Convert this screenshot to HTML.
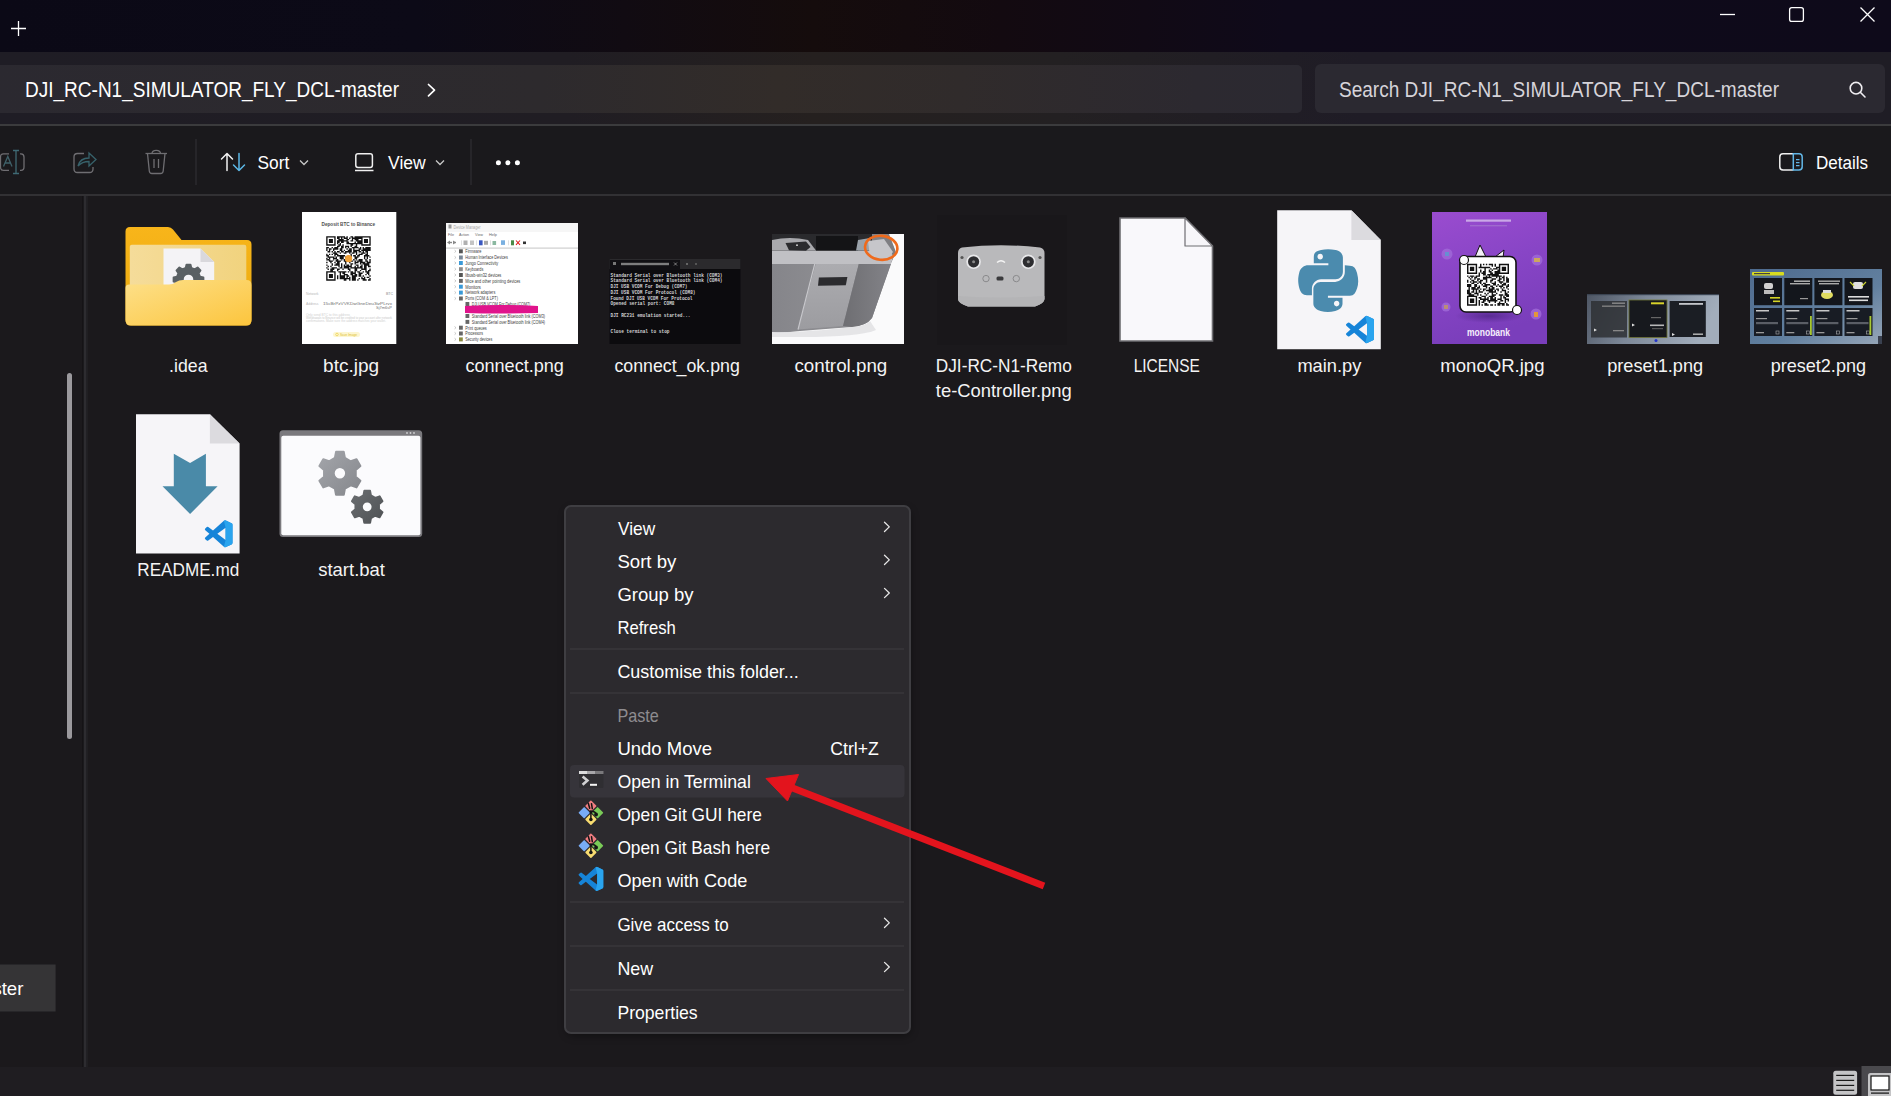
<!DOCTYPE html>
<html><head><meta charset="utf-8"><title>Explorer</title>
<style>html,body{margin:0;padding:0;width:1891px;height:1096px;overflow:hidden;background:#1c1a1e}svg{display:block}</style>
</head><body>
<svg width="1891" height="1096" viewBox="0 0 1891 1096" font-family="Liberation Sans, sans-serif">
<defs>
<linearGradient id="gTitle" x1="0" x2="1" y1="0" y2="0">
 <stop offset="0" stop-color="#0b0916"/><stop offset="0.22" stop-color="#0c0a17"/>
 <stop offset="0.33" stop-color="#110b12"/><stop offset="0.43" stop-color="#150c0c"/><stop offset="0.53" stop-color="#130a10"/>
 <stop offset="0.68" stop-color="#0f0a1a"/><stop offset="1" stop-color="#0e0a1a"/>
</linearGradient>
<linearGradient id="gNav" x1="0" x2="1" y1="0" y2="0">
 <stop offset="0" stop-color="#1f1d25"/><stop offset="0.3" stop-color="#201d23"/>
 <stop offset="0.43" stop-color="#25201f"/><stop offset="0.56" stop-color="#232022"/>
 <stop offset="0.72" stop-color="#1f1c26"/><stop offset="1" stop-color="#1f1d25"/>
</linearGradient>
<linearGradient id="gAddr" x1="0" x2="1" y1="0" y2="0">
 <stop offset="0" stop-color="#2b2930"/><stop offset="0.42" stop-color="#2d2a2d"/>
 <stop offset="0.6" stop-color="#322c29"/><stop offset="0.74" stop-color="#302b2b"/>
 <stop offset="0.92" stop-color="#2c2930"/><stop offset="1" stop-color="#2b2931"/>
</linearGradient>
</defs>
<rect x="0" y="0" width="1891" height="1096" fill="#1b191c"/>
<rect x="0" y="0" width="1891" height="52" fill="url(#gTitle)"/>
<rect x="0" y="52" width="1891" height="72" fill="url(#gNav)"/>
<rect x="-10" y="65" width="1312" height="48" rx="5" fill="url(#gAddr)"/>
<rect x="1315" y="64" width="570" height="49" rx="6" fill="#2b2931"/>
<rect x="0" y="124" width="1891" height="2" fill="#3b3b3d"/>
<rect x="0" y="126" width="1891" height="68" fill="#1a191c"/>
<rect x="0" y="194" width="1891" height="2" fill="#323134"/>
<rect x="82.3" y="196" width="1.4" height="871" fill="#131215"/><rect x="83.7" y="196" width="2.8" height="871" fill="#2d2c30"/><rect x="86.5" y="196" width="1.5" height="871" fill="#201f22"/>
<rect x="67" y="373" width="5" height="366" rx="2.5" fill="#9b999d"/>
<rect x="0" y="1067" width="1891" height="29" fill="#1f1d21"/>
<g stroke="#ffffff" stroke-width="1.3" fill="none"><path d="M11 28.5H26M18.5 21V36"/><path d="M1720 14.5H1735"/><rect x="1789.6" y="7.6" width="13.8" height="13.8" rx="2.2"/><path d="M1860.5 7.5L1874.5 21.5M1874.5 7.5L1860.5 21.5"/></g>
<text x="25" y="97" font-size="22" fill="#ffffff" textLength="374" lengthAdjust="spacingAndGlyphs" font-family="Liberation Sans" >DJI_RC-N1_SIMULATOR_FLY_DCL-master</text>
<path d="M428.5 84.5L434.5 90.2L428.5 95.8" stroke="#ffffff" stroke-width="1.7" fill="none" stroke-linecap="round" stroke-linejoin="round"/>
<text x="1339" y="97" font-size="22" fill="#d6d4da" textLength="440" lengthAdjust="spacingAndGlyphs" font-family="Liberation Sans" >Search DJI_RC-N1_SIMULATOR_FLY_DCL-master</text>
<g stroke="#f0eef2" stroke-width="1.6" fill="none"><circle cx="1856" cy="88.2" r="5.8"/><path d="M1860.3 92.3L1865 97" stroke-linecap="round"/></g>
<g fill="none" stroke-width="1.3" opacity="1"><path d="M9 153.8H3.5Q0.5 153.8 0.5 157V167Q0.5 170.3 3.5 170.3H9" stroke="#6f6e72"/><path d="M20 153.8H21Q24 153.8 24 157V167Q24 170.3 21 170.3H20" stroke="#6f6e72"/><path d="M3.5 166.5L7.8 156.5L12 166.5M5 163H10.5" stroke="#3f6169"/><path d="M16 150.5V173.5M13 150.5H19M13 173.5H19" stroke="#3f6a74"/></g>
<g fill="none" stroke-width="1.3"><path d="M84 153.5H77.5Q74 153.5 74 157V169Q74 172.5 77.5 172.5H89.5Q93 172.5 93 169V167" stroke="#6f6e72"/><path d="M78 166Q80 158 89 158V153L96 159.5L89 166V161.5Q82 161.5 78 166Z" stroke="#37626b"/></g>
<g fill="none" stroke="#6f6e72" stroke-width="1.3"><path d="M145.5 153.5H167"/><path d="M152 153.5Q152 150.3 156.2 150.3Q160.5 150.3 160.5 153.5"/><path d="M147.5 153.5L149.3 171Q149.5 173.5 152 173.5H160.5Q163 173.5 163.2 171L165 153.5"/><path d="M154 159V168M158.5 159V168"/></g>
<rect x="195.5" y="139" width="1" height="46" fill="#333236"/>
<g fill="none" stroke-width="1.5" stroke-linecap="round" stroke-linejoin="round"><path d="M227 170.5V153.5M221.5 159L227 153.5L232.5 159" stroke="#f2f2f2"/><path d="M239 153.5V170.5M233.5 165L239 170.5L244.5 165" stroke="#5cb8e6"/></g>
<text x="257.5" y="169" font-size="18" fill="#ffffff" textLength="31.8" lengthAdjust="spacingAndGlyphs" font-family="Liberation Sans" >Sort</text>
<path d="M300 160.5L304 164.5L308 160.5" stroke="#c8c8c8" stroke-width="1.3" fill="none"/>
<g fill="none" stroke="#f0f0f0" stroke-width="1.5"><rect x="355.8" y="153.8" width="16.6" height="13.6" rx="2.2"/><path d="M355 170.5H373.5"/></g>
<text x="388" y="169" font-size="18" fill="#ffffff" textLength="37.7" lengthAdjust="spacingAndGlyphs" font-family="Liberation Sans" >View</text>
<path d="M436 160.5L440 164.5L444 160.5" stroke="#c8c8c8" stroke-width="1.3" fill="none"/>
<rect x="470.5" y="139" width="1" height="46" fill="#333236"/>
<g fill="#ffffff"><circle cx="498.4" cy="162.7" r="2.5"/><circle cx="507.9" cy="162.7" r="2.5"/><circle cx="517.4" cy="162.7" r="2.5"/></g>
<g fill="none" stroke-width="1.5"><path d="M1793.5 153.8H1783Q1779.8 153.8 1779.8 157V166.8Q1779.8 170 1783 170H1793.5" stroke="#f0f0f0"/><path d="M1793.3 153.8H1799Q1802.2 153.8 1802.2 157V166.8Q1802.2 170 1799 170H1793.3Z" stroke="#62b6e6"/><path d="M1796 159.7H1799.5M1796 162.6H1799.5M1796 165.6H1799.5" stroke="#62b6e6" stroke-width="1.2"/></g>
<text x="1816" y="168.8" font-size="18" fill="#ffffff" textLength="52" lengthAdjust="spacingAndGlyphs" font-family="Liberation Sans" >Details</text>
<defs><linearGradient id="gFront" x1="0" y1="0" x2="1" y2="1"><stop offset="0" stop-color="#fde08a"/><stop offset="1" stop-color="#fcc53d"/></linearGradient><linearGradient id="gBack" x1="0" y1="0" x2="0" y2="1"><stop offset="0" stop-color="#f8b51a"/><stop offset="1" stop-color="#e9a90f"/></linearGradient><linearGradient id="gPaper" x1="0" y1="0" x2="1" y2="0"><stop offset="0" stop-color="#f5dc9a"/><stop offset="1" stop-color="#f1d37e"/></linearGradient></defs>
<path d="M130 227H168Q171 227 173 229.5L181.5 240H247Q251.5 240 251.5 244.5V320Q251.5 325.5 246 325.5H131Q125.5 325.5 125.5 320V231.5Q125.5 227 130 227Z" fill="url(#gBack)"/>
<rect x="129.8" y="244.8" width="116.5" height="60" rx="2" fill="url(#gPaper)"/>
<path d="M163.5 248.6H200.5L214.2 262V300H163.5Z" fill="#f4f3f6"/><path d="M200.5 248.6V262H214.2Z" fill="#d9d8dc"/>
<path d="M185.75 268.03 L186.50 264.63 L190.50 264.63 L191.25 268.03 L194.67 269.44 L197.60 267.58 L200.42 270.40 L198.56 273.33 L199.97 276.75 L203.37 277.50 L203.37 281.50 L199.97 282.25 L198.56 285.67 L200.42 288.60 L197.60 291.42 L194.67 289.56 L191.25 290.97 L190.50 294.37 L186.50 294.37 L185.75 290.97 L182.33 289.56 L179.40 291.42 L176.58 288.60 L178.44 285.67 L177.03 282.25 L173.63 281.50 L173.63 277.50 L177.03 276.75 L178.44 273.33 L176.58 270.40 L179.40 267.58 L182.33 269.44Z M194.30 279.50 A5.8 5.8 0 1 0 182.70 279.50 A5.8 5.8 0 1 0 194.30 279.50Z" fill="#5a6064" fill-rule="evenodd" stroke="#5a6064" stroke-width="2" stroke-linejoin="round"/>
<path d="M125.5 288Q125.5 284.5 129 284.5H169Q173 284.5 176 282Q179 280 183 280H246.5Q251.5 280 251.5 285V320Q251.5 325.5 246 325.5H131Q125.5 325.5 125.5 320Z" fill="url(#gFront)"/>
<rect x="302" y="212" width="94.3" height="132" fill="#ffffff"/>
<text x="321.5" y="226.2" font-size="5.4" fill="#505050" font-weight="bold" textLength="53.5" lengthAdjust="spacingAndGlyphs" font-family="Liberation Sans" >Deposit BTC to Binance</text>
<path d="M326.20 246.99h1.35v1.35h-1.35z M326.20 248.34h1.35v1.35h-1.35z M326.20 249.68h1.35v1.35h-1.35z M326.20 253.73h1.35v1.35h-1.35z M326.20 255.08h1.35v1.35h-1.35z M326.20 257.78h1.35v1.35h-1.35z M326.20 259.12h1.35v1.35h-1.35z M326.20 261.82h1.35v1.35h-1.35z M326.20 264.52h1.35v1.35h-1.35z M326.20 267.22h1.35v1.35h-1.35z M327.55 246.99h1.35v1.35h-1.35z M327.55 251.03h1.35v1.35h-1.35z M327.55 255.08h1.35v1.35h-1.35z M327.55 256.43h1.35v1.35h-1.35z M327.55 259.12h1.35v1.35h-1.35z M327.55 265.87h1.35v1.35h-1.35z M327.55 268.56h1.35v1.35h-1.35z M328.90 248.34h1.35v1.35h-1.35z M328.90 249.68h1.35v1.35h-1.35z M328.90 251.03h1.35v1.35h-1.35z M328.90 253.73h1.35v1.35h-1.35z M328.90 256.43h1.35v1.35h-1.35z M328.90 257.78h1.35v1.35h-1.35z M328.90 259.12h1.35v1.35h-1.35z M328.90 260.47h1.35v1.35h-1.35z M330.25 248.34h1.35v1.35h-1.35z M330.25 256.43h1.35v1.35h-1.35z M330.25 260.47h1.35v1.35h-1.35z M330.25 261.82h1.35v1.35h-1.35z M330.25 265.87h1.35v1.35h-1.35z M330.25 268.56h1.35v1.35h-1.35z M330.25 269.91h1.35v1.35h-1.35z M331.59 246.99h1.35v1.35h-1.35z M331.59 251.03h1.35v1.35h-1.35z M331.59 253.73h1.35v1.35h-1.35z M331.59 256.43h1.35v1.35h-1.35z M331.59 260.47h1.35v1.35h-1.35z M331.59 263.17h1.35v1.35h-1.35z M331.59 264.52h1.35v1.35h-1.35z M331.59 267.22h1.35v1.35h-1.35z M331.59 268.56h1.35v1.35h-1.35z M331.59 269.91h1.35v1.35h-1.35z M332.94 248.34h1.35v1.35h-1.35z M332.94 249.68h1.35v1.35h-1.35z M332.94 252.38h1.35v1.35h-1.35z M332.94 256.43h1.35v1.35h-1.35z M332.94 257.78h1.35v1.35h-1.35z M332.94 259.12h1.35v1.35h-1.35z M332.94 267.22h1.35v1.35h-1.35z M332.94 268.56h1.35v1.35h-1.35z M334.29 246.99h1.35v1.35h-1.35z M334.29 248.34h1.35v1.35h-1.35z M334.29 251.03h1.35v1.35h-1.35z M334.29 252.38h1.35v1.35h-1.35z M334.29 253.73h1.35v1.35h-1.35z M334.29 255.08h1.35v1.35h-1.35z M334.29 257.78h1.35v1.35h-1.35z M334.29 261.82h1.35v1.35h-1.35z M334.29 264.52h1.35v1.35h-1.35z M334.29 267.22h1.35v1.35h-1.35z M335.64 246.99h1.35v1.35h-1.35z M335.64 248.34h1.35v1.35h-1.35z M335.64 252.38h1.35v1.35h-1.35z M335.64 253.73h1.35v1.35h-1.35z M335.64 256.43h1.35v1.35h-1.35z M335.64 257.78h1.35v1.35h-1.35z M335.64 259.12h1.35v1.35h-1.35z M335.64 260.47h1.35v1.35h-1.35z M335.64 263.17h1.35v1.35h-1.35z M335.64 264.52h1.35v1.35h-1.35z M335.64 267.22h1.35v1.35h-1.35z M336.99 236.20h1.35v1.35h-1.35z M336.99 237.55h1.35v1.35h-1.35z M336.99 240.25h1.35v1.35h-1.35z M336.99 241.59h1.35v1.35h-1.35z M336.99 242.94h1.35v1.35h-1.35z M336.99 245.64h1.35v1.35h-1.35z M336.99 246.99h1.35v1.35h-1.35z M336.99 248.34h1.35v1.35h-1.35z M336.99 251.03h1.35v1.35h-1.35z M336.99 253.73h1.35v1.35h-1.35z M336.99 255.08h1.35v1.35h-1.35z M336.99 259.12h1.35v1.35h-1.35z M336.99 260.47h1.35v1.35h-1.35z M336.99 261.82h1.35v1.35h-1.35z M336.99 263.17h1.35v1.35h-1.35z M336.99 264.52h1.35v1.35h-1.35z M336.99 268.56h1.35v1.35h-1.35z M336.99 269.91h1.35v1.35h-1.35z M336.99 275.31h1.35v1.35h-1.35z M336.99 276.65h1.35v1.35h-1.35z M336.99 278.00h1.35v1.35h-1.35z M338.34 236.20h1.35v1.35h-1.35z M338.34 237.55h1.35v1.35h-1.35z M338.34 238.90h1.35v1.35h-1.35z M338.34 240.25h1.35v1.35h-1.35z M338.34 241.59h1.35v1.35h-1.35z M338.34 244.29h1.35v1.35h-1.35z M338.34 245.64h1.35v1.35h-1.35z M338.34 251.03h1.35v1.35h-1.35z M338.34 255.08h1.35v1.35h-1.35z M338.34 260.47h1.35v1.35h-1.35z M338.34 261.82h1.35v1.35h-1.35z M338.34 263.17h1.35v1.35h-1.35z M338.34 264.52h1.35v1.35h-1.35z M338.34 265.87h1.35v1.35h-1.35z M338.34 268.56h1.35v1.35h-1.35z M338.34 271.26h1.35v1.35h-1.35z M339.68 236.20h1.35v1.35h-1.35z M339.68 238.90h1.35v1.35h-1.35z M339.68 240.25h1.35v1.35h-1.35z M339.68 242.94h1.35v1.35h-1.35z M339.68 244.29h1.35v1.35h-1.35z M339.68 248.34h1.35v1.35h-1.35z M339.68 249.68h1.35v1.35h-1.35z M339.68 252.38h1.35v1.35h-1.35z M339.68 255.08h1.35v1.35h-1.35z M339.68 256.43h1.35v1.35h-1.35z M339.68 257.78h1.35v1.35h-1.35z M339.68 260.47h1.35v1.35h-1.35z M339.68 267.22h1.35v1.35h-1.35z M339.68 271.26h1.35v1.35h-1.35z M339.68 272.61h1.35v1.35h-1.35z M339.68 273.96h1.35v1.35h-1.35z M339.68 275.31h1.35v1.35h-1.35z M339.68 276.65h1.35v1.35h-1.35z M339.68 278.00h1.35v1.35h-1.35z M341.03 236.20h1.35v1.35h-1.35z M341.03 237.55h1.35v1.35h-1.35z M341.03 238.90h1.35v1.35h-1.35z M341.03 240.25h1.35v1.35h-1.35z M341.03 241.59h1.35v1.35h-1.35z M341.03 245.64h1.35v1.35h-1.35z M341.03 246.99h1.35v1.35h-1.35z M341.03 248.34h1.35v1.35h-1.35z M341.03 249.68h1.35v1.35h-1.35z M341.03 251.03h1.35v1.35h-1.35z M341.03 255.08h1.35v1.35h-1.35z M341.03 256.43h1.35v1.35h-1.35z M341.03 257.78h1.35v1.35h-1.35z M341.03 259.12h1.35v1.35h-1.35z M341.03 263.17h1.35v1.35h-1.35z M341.03 264.52h1.35v1.35h-1.35z M341.03 265.87h1.35v1.35h-1.35z M341.03 267.22h1.35v1.35h-1.35z M341.03 271.26h1.35v1.35h-1.35z M341.03 275.31h1.35v1.35h-1.35z M341.03 276.65h1.35v1.35h-1.35z M341.03 278.00h1.35v1.35h-1.35z M342.38 236.20h1.35v1.35h-1.35z M342.38 238.90h1.35v1.35h-1.35z M342.38 240.25h1.35v1.35h-1.35z M342.38 241.59h1.35v1.35h-1.35z M342.38 244.29h1.35v1.35h-1.35z M342.38 245.64h1.35v1.35h-1.35z M342.38 246.99h1.35v1.35h-1.35z M342.38 251.03h1.35v1.35h-1.35z M342.38 255.08h1.35v1.35h-1.35z M342.38 256.43h1.35v1.35h-1.35z M342.38 257.78h1.35v1.35h-1.35z M342.38 268.56h1.35v1.35h-1.35z M342.38 271.26h1.35v1.35h-1.35z M342.38 272.61h1.35v1.35h-1.35z M342.38 275.31h1.35v1.35h-1.35z M342.38 276.65h1.35v1.35h-1.35z M342.38 278.00h1.35v1.35h-1.35z M343.73 236.20h1.35v1.35h-1.35z M343.73 237.55h1.35v1.35h-1.35z M343.73 240.25h1.35v1.35h-1.35z M343.73 249.68h1.35v1.35h-1.35z M343.73 252.38h1.35v1.35h-1.35z M343.73 255.08h1.35v1.35h-1.35z M343.73 259.12h1.35v1.35h-1.35z M343.73 260.47h1.35v1.35h-1.35z M343.73 264.52h1.35v1.35h-1.35z M343.73 265.87h1.35v1.35h-1.35z M343.73 267.22h1.35v1.35h-1.35z M343.73 271.26h1.35v1.35h-1.35z M343.73 272.61h1.35v1.35h-1.35z M343.73 273.96h1.35v1.35h-1.35z M343.73 275.31h1.35v1.35h-1.35z M343.73 276.65h1.35v1.35h-1.35z M343.73 278.00h1.35v1.35h-1.35z M343.73 279.35h1.35v1.35h-1.35z M345.08 237.55h1.35v1.35h-1.35z M345.08 240.25h1.35v1.35h-1.35z M345.08 245.64h1.35v1.35h-1.35z M345.08 246.99h1.35v1.35h-1.35z M345.08 251.03h1.35v1.35h-1.35z M345.08 252.38h1.35v1.35h-1.35z M345.08 256.43h1.35v1.35h-1.35z M345.08 257.78h1.35v1.35h-1.35z M345.08 260.47h1.35v1.35h-1.35z M345.08 261.82h1.35v1.35h-1.35z M345.08 263.17h1.35v1.35h-1.35z M345.08 265.87h1.35v1.35h-1.35z M345.08 267.22h1.35v1.35h-1.35z M345.08 271.26h1.35v1.35h-1.35z M345.08 273.96h1.35v1.35h-1.35z M345.08 278.00h1.35v1.35h-1.35z M345.08 279.35h1.35v1.35h-1.35z M346.43 236.20h1.35v1.35h-1.35z M346.43 237.55h1.35v1.35h-1.35z M346.43 238.90h1.35v1.35h-1.35z M346.43 240.25h1.35v1.35h-1.35z M346.43 241.59h1.35v1.35h-1.35z M346.43 242.94h1.35v1.35h-1.35z M346.43 245.64h1.35v1.35h-1.35z M346.43 248.34h1.35v1.35h-1.35z M346.43 251.03h1.35v1.35h-1.35z M346.43 256.43h1.35v1.35h-1.35z M346.43 260.47h1.35v1.35h-1.35z M346.43 264.52h1.35v1.35h-1.35z M346.43 265.87h1.35v1.35h-1.35z M346.43 267.22h1.35v1.35h-1.35z M346.43 273.96h1.35v1.35h-1.35z M346.43 275.31h1.35v1.35h-1.35z M346.43 276.65h1.35v1.35h-1.35z M346.43 278.00h1.35v1.35h-1.35z M347.78 238.90h1.35v1.35h-1.35z M347.78 241.59h1.35v1.35h-1.35z M347.78 242.94h1.35v1.35h-1.35z M347.78 245.64h1.35v1.35h-1.35z M347.78 246.99h1.35v1.35h-1.35z M347.78 249.68h1.35v1.35h-1.35z M347.78 251.03h1.35v1.35h-1.35z M347.78 255.08h1.35v1.35h-1.35z M347.78 256.43h1.35v1.35h-1.35z M347.78 257.78h1.35v1.35h-1.35z M347.78 259.12h1.35v1.35h-1.35z M347.78 260.47h1.35v1.35h-1.35z M347.78 264.52h1.35v1.35h-1.35z M347.78 265.87h1.35v1.35h-1.35z M347.78 267.22h1.35v1.35h-1.35z M347.78 268.56h1.35v1.35h-1.35z M347.78 271.26h1.35v1.35h-1.35z M347.78 275.31h1.35v1.35h-1.35z M347.78 278.00h1.35v1.35h-1.35z M349.12 237.55h1.35v1.35h-1.35z M349.12 242.94h1.35v1.35h-1.35z M349.12 248.34h1.35v1.35h-1.35z M349.12 249.68h1.35v1.35h-1.35z M349.12 251.03h1.35v1.35h-1.35z M349.12 252.38h1.35v1.35h-1.35z M349.12 257.78h1.35v1.35h-1.35z M349.12 261.82h1.35v1.35h-1.35z M349.12 265.87h1.35v1.35h-1.35z M349.12 268.56h1.35v1.35h-1.35z M349.12 269.91h1.35v1.35h-1.35z M349.12 276.65h1.35v1.35h-1.35z M349.12 278.00h1.35v1.35h-1.35z M349.12 279.35h1.35v1.35h-1.35z M350.47 236.20h1.35v1.35h-1.35z M350.47 240.25h1.35v1.35h-1.35z M350.47 242.94h1.35v1.35h-1.35z M350.47 244.29h1.35v1.35h-1.35z M350.47 245.64h1.35v1.35h-1.35z M350.47 248.34h1.35v1.35h-1.35z M350.47 249.68h1.35v1.35h-1.35z M350.47 251.03h1.35v1.35h-1.35z M350.47 253.73h1.35v1.35h-1.35z M350.47 255.08h1.35v1.35h-1.35z M350.47 256.43h1.35v1.35h-1.35z M350.47 257.78h1.35v1.35h-1.35z M350.47 260.47h1.35v1.35h-1.35z M350.47 263.17h1.35v1.35h-1.35z M350.47 264.52h1.35v1.35h-1.35z M350.47 265.87h1.35v1.35h-1.35z M350.47 267.22h1.35v1.35h-1.35z M350.47 271.26h1.35v1.35h-1.35z M350.47 272.61h1.35v1.35h-1.35z M350.47 273.96h1.35v1.35h-1.35z M351.82 236.20h1.35v1.35h-1.35z M351.82 237.55h1.35v1.35h-1.35z M351.82 238.90h1.35v1.35h-1.35z M351.82 240.25h1.35v1.35h-1.35z M351.82 242.94h1.35v1.35h-1.35z M351.82 244.29h1.35v1.35h-1.35z M351.82 246.99h1.35v1.35h-1.35z M351.82 252.38h1.35v1.35h-1.35z M351.82 260.47h1.35v1.35h-1.35z M351.82 263.17h1.35v1.35h-1.35z M351.82 267.22h1.35v1.35h-1.35z M351.82 271.26h1.35v1.35h-1.35z M351.82 272.61h1.35v1.35h-1.35z M351.82 273.96h1.35v1.35h-1.35z M351.82 275.31h1.35v1.35h-1.35z M351.82 276.65h1.35v1.35h-1.35z M351.82 278.00h1.35v1.35h-1.35z M351.82 279.35h1.35v1.35h-1.35z M353.17 237.55h1.35v1.35h-1.35z M353.17 242.94h1.35v1.35h-1.35z M353.17 246.99h1.35v1.35h-1.35z M353.17 248.34h1.35v1.35h-1.35z M353.17 249.68h1.35v1.35h-1.35z M353.17 251.03h1.35v1.35h-1.35z M353.17 252.38h1.35v1.35h-1.35z M353.17 255.08h1.35v1.35h-1.35z M353.17 259.12h1.35v1.35h-1.35z M353.17 267.22h1.35v1.35h-1.35z M353.17 272.61h1.35v1.35h-1.35z M353.17 275.31h1.35v1.35h-1.35z M353.17 276.65h1.35v1.35h-1.35z M353.17 278.00h1.35v1.35h-1.35z M353.17 279.35h1.35v1.35h-1.35z M354.52 236.20h1.35v1.35h-1.35z M354.52 237.55h1.35v1.35h-1.35z M354.52 238.90h1.35v1.35h-1.35z M354.52 241.59h1.35v1.35h-1.35z M354.52 242.94h1.35v1.35h-1.35z M354.52 245.64h1.35v1.35h-1.35z M354.52 246.99h1.35v1.35h-1.35z M354.52 249.68h1.35v1.35h-1.35z M354.52 251.03h1.35v1.35h-1.35z M354.52 255.08h1.35v1.35h-1.35z M354.52 256.43h1.35v1.35h-1.35z M354.52 257.78h1.35v1.35h-1.35z M354.52 260.47h1.35v1.35h-1.35z M354.52 261.82h1.35v1.35h-1.35z M354.52 263.17h1.35v1.35h-1.35z M354.52 265.87h1.35v1.35h-1.35z M354.52 267.22h1.35v1.35h-1.35z M354.52 268.56h1.35v1.35h-1.35z M354.52 269.91h1.35v1.35h-1.35z M354.52 271.26h1.35v1.35h-1.35z M354.52 272.61h1.35v1.35h-1.35z M354.52 273.96h1.35v1.35h-1.35z M354.52 275.31h1.35v1.35h-1.35z M354.52 276.65h1.35v1.35h-1.35z M354.52 278.00h1.35v1.35h-1.35z M354.52 279.35h1.35v1.35h-1.35z M355.87 236.20h1.35v1.35h-1.35z M355.87 237.55h1.35v1.35h-1.35z M355.87 238.90h1.35v1.35h-1.35z M355.87 240.25h1.35v1.35h-1.35z M355.87 242.94h1.35v1.35h-1.35z M355.87 244.29h1.35v1.35h-1.35z M355.87 245.64h1.35v1.35h-1.35z M355.87 246.99h1.35v1.35h-1.35z M355.87 249.68h1.35v1.35h-1.35z M355.87 251.03h1.35v1.35h-1.35z M355.87 252.38h1.35v1.35h-1.35z M355.87 253.73h1.35v1.35h-1.35z M355.87 256.43h1.35v1.35h-1.35z M355.87 257.78h1.35v1.35h-1.35z M355.87 259.12h1.35v1.35h-1.35z M355.87 261.82h1.35v1.35h-1.35z M355.87 264.52h1.35v1.35h-1.35z M355.87 267.22h1.35v1.35h-1.35z M355.87 268.56h1.35v1.35h-1.35z M355.87 269.91h1.35v1.35h-1.35z M355.87 273.96h1.35v1.35h-1.35z M355.87 275.31h1.35v1.35h-1.35z M357.22 236.20h1.35v1.35h-1.35z M357.22 237.55h1.35v1.35h-1.35z M357.22 238.90h1.35v1.35h-1.35z M357.22 240.25h1.35v1.35h-1.35z M357.22 241.59h1.35v1.35h-1.35z M357.22 242.94h1.35v1.35h-1.35z M357.22 246.99h1.35v1.35h-1.35z M357.22 249.68h1.35v1.35h-1.35z M357.22 255.08h1.35v1.35h-1.35z M357.22 256.43h1.35v1.35h-1.35z M357.22 260.47h1.35v1.35h-1.35z M357.22 261.82h1.35v1.35h-1.35z M357.22 264.52h1.35v1.35h-1.35z M357.22 265.87h1.35v1.35h-1.35z M357.22 267.22h1.35v1.35h-1.35z M357.22 271.26h1.35v1.35h-1.35z M357.22 279.35h1.35v1.35h-1.35z M358.56 236.20h1.35v1.35h-1.35z M358.56 237.55h1.35v1.35h-1.35z M358.56 240.25h1.35v1.35h-1.35z M358.56 241.59h1.35v1.35h-1.35z M358.56 242.94h1.35v1.35h-1.35z M358.56 248.34h1.35v1.35h-1.35z M358.56 249.68h1.35v1.35h-1.35z M358.56 251.03h1.35v1.35h-1.35z M358.56 253.73h1.35v1.35h-1.35z M358.56 255.08h1.35v1.35h-1.35z M358.56 259.12h1.35v1.35h-1.35z M358.56 260.47h1.35v1.35h-1.35z M358.56 267.22h1.35v1.35h-1.35z M358.56 271.26h1.35v1.35h-1.35z M358.56 272.61h1.35v1.35h-1.35z M358.56 273.96h1.35v1.35h-1.35z M358.56 275.31h1.35v1.35h-1.35z M358.56 278.00h1.35v1.35h-1.35z M359.91 236.20h1.35v1.35h-1.35z M359.91 237.55h1.35v1.35h-1.35z M359.91 240.25h1.35v1.35h-1.35z M359.91 241.59h1.35v1.35h-1.35z M359.91 242.94h1.35v1.35h-1.35z M359.91 246.99h1.35v1.35h-1.35z M359.91 248.34h1.35v1.35h-1.35z M359.91 251.03h1.35v1.35h-1.35z M359.91 253.73h1.35v1.35h-1.35z M359.91 259.12h1.35v1.35h-1.35z M359.91 260.47h1.35v1.35h-1.35z M359.91 261.82h1.35v1.35h-1.35z M359.91 263.17h1.35v1.35h-1.35z M359.91 265.87h1.35v1.35h-1.35z M359.91 267.22h1.35v1.35h-1.35z M359.91 269.91h1.35v1.35h-1.35z M359.91 272.61h1.35v1.35h-1.35z M359.91 273.96h1.35v1.35h-1.35z M359.91 275.31h1.35v1.35h-1.35z M361.26 249.68h1.35v1.35h-1.35z M361.26 252.38h1.35v1.35h-1.35z M361.26 253.73h1.35v1.35h-1.35z M361.26 259.12h1.35v1.35h-1.35z M361.26 260.47h1.35v1.35h-1.35z M361.26 261.82h1.35v1.35h-1.35z M361.26 264.52h1.35v1.35h-1.35z M361.26 265.87h1.35v1.35h-1.35z M361.26 267.22h1.35v1.35h-1.35z M361.26 268.56h1.35v1.35h-1.35z M361.26 272.61h1.35v1.35h-1.35z M361.26 276.65h1.35v1.35h-1.35z M361.26 278.00h1.35v1.35h-1.35z M362.61 246.99h1.35v1.35h-1.35z M362.61 248.34h1.35v1.35h-1.35z M362.61 249.68h1.35v1.35h-1.35z M362.61 251.03h1.35v1.35h-1.35z M362.61 252.38h1.35v1.35h-1.35z M362.61 261.82h1.35v1.35h-1.35z M362.61 263.17h1.35v1.35h-1.35z M362.61 268.56h1.35v1.35h-1.35z M362.61 271.26h1.35v1.35h-1.35z M362.61 275.31h1.35v1.35h-1.35z M362.61 278.00h1.35v1.35h-1.35z M362.61 279.35h1.35v1.35h-1.35z M363.96 248.34h1.35v1.35h-1.35z M363.96 249.68h1.35v1.35h-1.35z M363.96 252.38h1.35v1.35h-1.35z M363.96 255.08h1.35v1.35h-1.35z M363.96 256.43h1.35v1.35h-1.35z M363.96 257.78h1.35v1.35h-1.35z M363.96 261.82h1.35v1.35h-1.35z M363.96 263.17h1.35v1.35h-1.35z M363.96 264.52h1.35v1.35h-1.35z M363.96 265.87h1.35v1.35h-1.35z M363.96 267.22h1.35v1.35h-1.35z M363.96 268.56h1.35v1.35h-1.35z M363.96 276.65h1.35v1.35h-1.35z M363.96 278.00h1.35v1.35h-1.35z M363.96 279.35h1.35v1.35h-1.35z M365.31 246.99h1.35v1.35h-1.35z M365.31 248.34h1.35v1.35h-1.35z M365.31 249.68h1.35v1.35h-1.35z M365.31 251.03h1.35v1.35h-1.35z M365.31 253.73h1.35v1.35h-1.35z M365.31 255.08h1.35v1.35h-1.35z M365.31 259.12h1.35v1.35h-1.35z M365.31 260.47h1.35v1.35h-1.35z M365.31 263.17h1.35v1.35h-1.35z M365.31 264.52h1.35v1.35h-1.35z M365.31 265.87h1.35v1.35h-1.35z M365.31 267.22h1.35v1.35h-1.35z M365.31 268.56h1.35v1.35h-1.35z M365.31 269.91h1.35v1.35h-1.35z M365.31 271.26h1.35v1.35h-1.35z M365.31 273.96h1.35v1.35h-1.35z M365.31 279.35h1.35v1.35h-1.35z M366.65 246.99h1.35v1.35h-1.35z M366.65 248.34h1.35v1.35h-1.35z M366.65 249.68h1.35v1.35h-1.35z M366.65 251.03h1.35v1.35h-1.35z M366.65 252.38h1.35v1.35h-1.35z M366.65 253.73h1.35v1.35h-1.35z M366.65 255.08h1.35v1.35h-1.35z M366.65 256.43h1.35v1.35h-1.35z M366.65 257.78h1.35v1.35h-1.35z M366.65 260.47h1.35v1.35h-1.35z M366.65 261.82h1.35v1.35h-1.35z M366.65 263.17h1.35v1.35h-1.35z M366.65 264.52h1.35v1.35h-1.35z M366.65 271.26h1.35v1.35h-1.35z M366.65 272.61h1.35v1.35h-1.35z M366.65 276.65h1.35v1.35h-1.35z M368.00 246.99h1.35v1.35h-1.35z M368.00 248.34h1.35v1.35h-1.35z M368.00 249.68h1.35v1.35h-1.35z M368.00 255.08h1.35v1.35h-1.35z M368.00 261.82h1.35v1.35h-1.35z M368.00 263.17h1.35v1.35h-1.35z M368.00 264.52h1.35v1.35h-1.35z M368.00 265.87h1.35v1.35h-1.35z M368.00 269.91h1.35v1.35h-1.35z M368.00 271.26h1.35v1.35h-1.35z M368.00 272.61h1.35v1.35h-1.35z M368.00 273.96h1.35v1.35h-1.35z M368.00 276.65h1.35v1.35h-1.35z M368.00 279.35h1.35v1.35h-1.35z M369.35 246.99h1.35v1.35h-1.35z M369.35 248.34h1.35v1.35h-1.35z M369.35 249.68h1.35v1.35h-1.35z M369.35 256.43h1.35v1.35h-1.35z M369.35 259.12h1.35v1.35h-1.35z M369.35 260.47h1.35v1.35h-1.35z M369.35 261.82h1.35v1.35h-1.35z M369.35 265.87h1.35v1.35h-1.35z M369.35 268.56h1.35v1.35h-1.35z M369.35 269.91h1.35v1.35h-1.35z M369.35 275.31h1.35v1.35h-1.35z M369.35 278.00h1.35v1.35h-1.35z M369.35 279.35h1.35v1.35h-1.35z M326.20 236.20h9.44v9.44h-9.44z M327.55 237.55v6.74h6.74v-6.74z M328.90 238.90h4.05v4.05h-4.05z M361.26 236.20h9.44v9.44h-9.44z M362.61 237.55v6.74h6.74v-6.74z M363.96 238.90h4.05v4.05h-4.05z M326.20 271.26h9.44v9.44h-9.44z M327.55 272.61v6.74h6.74v-6.74z M328.90 273.96h4.05v4.05h-4.05z" fill="#111" fill-rule="evenodd"/>
<circle cx="348.6" cy="258.7" r="3.6" fill="#f0a23a"/>
<text x="306" y="295.2" font-size="4.2" fill="#b8b8b8" textLength="12.5" lengthAdjust="spacingAndGlyphs" font-family="Liberation Sans" >Network</text>
<text x="386" y="295.2" font-size="4.4" fill="#8a8a8a" textLength="7" lengthAdjust="spacingAndGlyphs" font-family="Liberation Sans" >BTC</text>
<text x="306" y="305.2" font-size="4.2" fill="#b8b8b8" textLength="12.5" lengthAdjust="spacingAndGlyphs" font-family="Liberation Sans" >Address</text>
<text x="323" y="304.7" font-size="4.4" fill="#707070" textLength="69" lengthAdjust="spacingAndGlyphs" font-family="Liberation Sans" >15cBrPzVVKDwGneDeu3tzPLrvx</text>
<text x="376" y="309.3" font-size="4.4" fill="#707070" textLength="16" lengthAdjust="spacingAndGlyphs" font-family="Liberation Sans" >Sj7m6sP</text>
<text x="306" y="315.5" font-size="3.6" fill="#d0d0d0" textLength="44" lengthAdjust="spacingAndGlyphs" font-family="Liberation Sans" >Only send BTC to this address</text>
<text x="306" y="318.7" font-size="3.6" fill="#c8c8c8" textLength="86" lengthAdjust="spacingAndGlyphs" font-family="Liberation Sans" >Withdrawals to Binance will be credited to your account after network</text>
<text x="306" y="321.9" font-size="3.6" fill="#d0d0d0" textLength="80" lengthAdjust="spacingAndGlyphs" font-family="Liberation Sans" >confirmations. Make sure the address matches your wallet.</text>
<rect x="333" y="332" width="27" height="5" rx="2.5" fill="#fdf6d0"/><circle cx="337" cy="334.5" r="1.3" fill="none" stroke="#e8c830" stroke-width="0.6"/>
<text x="340" y="336" font-size="3.6" fill="#e0c030" textLength="17" lengthAdjust="spacingAndGlyphs" font-family="Liberation Sans" >Save Image</text>
<rect x="446" y="223" width="132" height="121" fill="#ffffff"/>
<rect x="446" y="223" width="132" height="9" fill="#f6f6f6"/>
<rect x="448.5" y="224.5" width="3" height="4" fill="#9a9a9a"/>
<text x="453.5" y="229.3" font-size="4.8" fill="#a8a8a8" textLength="27" lengthAdjust="spacingAndGlyphs" font-family="Liberation Sans" >Device Manager</text>
<text x="448" y="236.2" font-size="4.4" fill="#666" textLength="6" lengthAdjust="spacingAndGlyphs" font-family="Liberation Sans" >File</text>
<text x="459" y="236.2" font-size="4.4" fill="#666" textLength="10" lengthAdjust="spacingAndGlyphs" font-family="Liberation Sans" >Action</text>
<text x="475" y="236.2" font-size="4.4" fill="#666" textLength="8" lengthAdjust="spacingAndGlyphs" font-family="Liberation Sans" >View</text>
<text x="489" y="236.2" font-size="4.4" fill="#666" textLength="8" lengthAdjust="spacingAndGlyphs" font-family="Liberation Sans" >Help</text>
<g><path d="M447 242.5L450 240.5V244.5Z M456 242.5L453 240.5V244.5Z" fill="#888"/><rect x="450" y="241.8" width="2" height="1.4" fill="#888"/><rect x="454" y="241.8" width="2" height="1.4" fill="#888"/><rect x="461" y="240.3" width="0.6" height="5" fill="#ccc"/><rect x="463.5" y="240.5" width="4" height="4.5" fill="#b0b0b0"/><rect x="470" y="240.5" width="4" height="4.5" fill="#c4c4c4"/><rect x="476" y="240.3" width="0.6" height="5" fill="#ccc"/><rect x="479" y="240.3" width="3.6" height="5" fill="#3a58c0"/><rect x="484" y="240.8" width="4" height="4" fill="#a8a8a8"/><rect x="490" y="240.3" width="0.6" height="5" fill="#ccc"/><rect x="492.5" y="241" width="3.6" height="4" fill="#8ab8a0"/><rect x="501" y="240.3" width="4" height="4.6" fill="#7ab0e0"/><rect x="508" y="240.3" width="0.6" height="5" fill="#ccc"/><rect x="511" y="240.3" width="3" height="5" fill="#4a8a48"/><path d="M516 240.5L520 244.8M520 240.5L516 244.8" stroke="#e02020" stroke-width="1.1"/><rect x="523" y="241.5" width="3" height="2.6" fill="#333"/></g>
<rect x="446" y="247.5" width="132" height="1.2" fill="#cfcfcf"/>
<rect x="459.0" y="249.3" width="3.8" height="4" fill="#555"/>
<text x="465.3" y="253.10000000000002" font-size="5.2" fill="#3c3c3c" textLength="16" lengthAdjust="spacingAndGlyphs" font-family="Liberation Sans" >Firmware</text>
<path d="M454.5 250.10000000000002L456 251.3L454.5 252.5" stroke="#aaa" stroke-width="0.6" fill="none"/>
<rect x="459.0" y="255.5" width="3.8" height="4" fill="#7a8898"/>
<text x="465.3" y="259.3" font-size="5.2" fill="#3c3c3c" textLength="42.5" lengthAdjust="spacingAndGlyphs" font-family="Liberation Sans" >Human Interface Devices</text>
<path d="M454.5 256.3L456 257.5L454.5 258.7" stroke="#aaa" stroke-width="0.6" fill="none"/>
<rect x="459.0" y="261" width="3.8" height="4" fill="#3a9ad8"/>
<text x="465.3" y="264.8" font-size="5.2" fill="#3c3c3c" textLength="33" lengthAdjust="spacingAndGlyphs" font-family="Liberation Sans" >Jungo Connectivity</text>
<path d="M454.5 261.8L456 263L454.5 264.2" stroke="#aaa" stroke-width="0.6" fill="none"/>
<rect x="459.0" y="267.2" width="3.8" height="4" fill="#8a8a8a"/>
<text x="465.3" y="271.0" font-size="5.2" fill="#3c3c3c" textLength="18" lengthAdjust="spacingAndGlyphs" font-family="Liberation Sans" >Keyboards</text>
<path d="M454.5 268.0L456 269.2L454.5 270.4" stroke="#aaa" stroke-width="0.6" fill="none"/>
<rect x="459.0" y="273" width="3.8" height="4" fill="#555"/>
<text x="465.3" y="276.8" font-size="5.2" fill="#3c3c3c" textLength="36" lengthAdjust="spacingAndGlyphs" font-family="Liberation Sans" >libusb-win32 devices</text>
<path d="M454.5 273.8L456 275L454.5 276.2" stroke="#aaa" stroke-width="0.6" fill="none"/>
<rect x="459.0" y="278.9" width="3.8" height="4" fill="#666"/>
<text x="465.3" y="282.7" font-size="5.2" fill="#3c3c3c" textLength="55" lengthAdjust="spacingAndGlyphs" font-family="Liberation Sans" >Mice and other pointing devices</text>
<path d="M454.5 279.7L456 280.9L454.5 282.09999999999997" stroke="#aaa" stroke-width="0.6" fill="none"/>
<rect x="459.0" y="284.7" width="3.8" height="4" fill="#3a9ad8"/>
<text x="465.3" y="288.5" font-size="5.2" fill="#3c3c3c" textLength="15.5" lengthAdjust="spacingAndGlyphs" font-family="Liberation Sans" >Monitors</text>
<path d="M454.5 285.5L456 286.7L454.5 287.9" stroke="#aaa" stroke-width="0.6" fill="none"/>
<rect x="459.0" y="290.6" width="3.8" height="4" fill="#3a9ad8"/>
<text x="465.3" y="294.40000000000003" font-size="5.2" fill="#3c3c3c" textLength="30" lengthAdjust="spacingAndGlyphs" font-family="Liberation Sans" >Network adapters</text>
<path d="M454.5 291.40000000000003L456 292.6L454.5 293.8" stroke="#aaa" stroke-width="0.6" fill="none"/>
<rect x="459.0" y="296.5" width="3.8" height="4" fill="#666"/>
<text x="465.3" y="300.3" font-size="5.2" fill="#3c3c3c" textLength="32.6" lengthAdjust="spacingAndGlyphs" font-family="Liberation Sans" >Ports (COM &amp; LPT)</text>
<path d="M454.5 297.3L456 298.5L454.5 299.7" stroke="#aaa" stroke-width="0.6" fill="none"/>
<rect x="465.5" y="302" width="3.8" height="4" fill="#666"/>
<text x="471.8" y="305.8" font-size="5.2" fill="#3c3c3c" textLength="58.5" lengthAdjust="spacingAndGlyphs" font-family="Liberation Sans" >DJI USB VCOM For Debug (COM7)</text>
<rect x="465.5" y="307.6" width="3.8" height="4" fill="#666"/>
<text x="471.8" y="311.40000000000003" font-size="5.2" fill="#3c3c3c" textLength="60.4" lengthAdjust="spacingAndGlyphs" font-family="Liberation Sans" >DJI USB VCOM For Protocol (COM8)</text>
<rect x="465.5" y="314" width="3.8" height="4" fill="#666"/>
<text x="471.8" y="317.8" font-size="5.2" fill="#3c3c3c" textLength="73.3" lengthAdjust="spacingAndGlyphs" font-family="Liberation Sans" >Standard Serial over Bluetooth link (COM3)</text>
<rect x="465.5" y="319.9" width="3.8" height="4" fill="#666"/>
<text x="471.8" y="323.7" font-size="5.2" fill="#3c3c3c" textLength="73.3" lengthAdjust="spacingAndGlyphs" font-family="Liberation Sans" >Standard Serial over Bluetooth link (COM4)</text>
<rect x="459.0" y="325.7" width="3.8" height="4" fill="#666"/>
<text x="465.3" y="329.5" font-size="5.2" fill="#3c3c3c" textLength="21.5" lengthAdjust="spacingAndGlyphs" font-family="Liberation Sans" >Print queues</text>
<path d="M454.5 326.5L456 327.7L454.5 328.9" stroke="#aaa" stroke-width="0.6" fill="none"/>
<rect x="459.0" y="331.5" width="3.8" height="4" fill="#666"/>
<text x="465.3" y="335.3" font-size="5.2" fill="#3c3c3c" textLength="17.7" lengthAdjust="spacingAndGlyphs" font-family="Liberation Sans" >Processors</text>
<path d="M454.5 332.3L456 333.5L454.5 334.7" stroke="#aaa" stroke-width="0.6" fill="none"/>
<rect x="459.0" y="337.4" width="3.8" height="4" fill="#8a8a40"/>
<text x="465.3" y="341.2" font-size="5.2" fill="#3c3c3c" textLength="27" lengthAdjust="spacingAndGlyphs" font-family="Liberation Sans" >Security devices</text>
<path d="M454.5 338.2L456 339.4L454.5 340.59999999999997" stroke="#aaa" stroke-width="0.6" fill="none"/>
<path d="M465 306Q500 304 538 306V313Q500 314 465 313Z" fill="#e0148c"/>
<rect x="609.5" y="259" width="131" height="85" fill="#0c0b0e"/>
<rect x="609.5" y="259" width="131" height="10" fill="#2b2a2d"/>
<rect x="610" y="260" width="70" height="10" fill="#111014"/>
<rect x="613" y="262" width="3" height="3" fill="#777"/><rect x="621" y="262.8" width="48" height="2.4" fill="#9a9a9a" opacity="0.8"/><path d="M674 262.5L677 265.5M677 262.5L674 265.5" stroke="#aaa" stroke-width="0.7"/>
<rect x="686" y="263" width="2" height="2" fill="#666"/><rect x="695" y="263" width="2" height="2" fill="#555"/>
<text x="610.5" y="276.5" font-size="5.6" fill="#d2d2d4" font-weight="bold" textLength="112" lengthAdjust="spacingAndGlyphs" font-family="Liberation Mono" >Standard Serial over Bluetooth link (COM3)</text>
<text x="610.5" y="282.3" font-size="5.6" fill="#d2d2d4" font-weight="bold" textLength="112" lengthAdjust="spacingAndGlyphs" font-family="Liberation Mono" >Standard Serial over Bluetooth link (COM4)</text>
<text x="610.5" y="288.0" font-size="5.6" fill="#d2d2d4" font-weight="bold" textLength="77" lengthAdjust="spacingAndGlyphs" font-family="Liberation Mono" >DJI USB VCOM For Debug (COM7)</text>
<text x="610.5" y="293.8" font-size="5.6" fill="#d2d2d4" font-weight="bold" textLength="85" lengthAdjust="spacingAndGlyphs" font-family="Liberation Mono" >DJI USB VCOM For Protocol (COM8)</text>
<text x="610.5" y="299.5" font-size="5.6" fill="#d2d2d4" font-weight="bold" textLength="82" lengthAdjust="spacingAndGlyphs" font-family="Liberation Mono" >Found DJI USB VCOM For Protocol</text>
<text x="610.5" y="305.3" font-size="5.6" fill="#d2d2d4" font-weight="bold" textLength="64" lengthAdjust="spacingAndGlyphs" font-family="Liberation Mono" >Opened serial port: COM8</text>
<text x="610.5" y="316.5" font-size="5.6" fill="#d2d2d4" font-weight="bold" textLength="80" lengthAdjust="spacingAndGlyphs" font-family="Liberation Mono" >DJI RC231 emulation started...</text>
<text x="610.5" y="333.3" font-size="5.6" fill="#d2d2d4" font-weight="bold" textLength="59" lengthAdjust="spacingAndGlyphs" font-family="Liberation Mono" >Close terminal to stop</text>
<defs><linearGradient id="gCtlL" x1="0" y1="0" x2="1" y2="0"><stop offset="0" stop-color="#85858a"/><stop offset="0.5" stop-color="#8e8e92"/><stop offset="1" stop-color="#7c7c80"/></linearGradient><linearGradient id="gCtlC" x1="0" y1="0" x2="0" y2="1"><stop offset="0" stop-color="#acacb0"/><stop offset="1" stop-color="#9c9ca0"/></linearGradient><linearGradient id="gCtlR" x1="0" y1="0" x2="1" y2="0"><stop offset="0" stop-color="#6e6e72"/><stop offset="1" stop-color="#838388"/></linearGradient></defs>
<rect x="772" y="234" width="132" height="110" fill="#fafafb"/>
<path d="M772 234H891L896 252L891 264L872 318Q866 326 852 327L800 331Q785 333 772 332Z" fill="url(#gCtlL)"/>
<path d="M816 263H859L843 326L798 329.5Z" fill="url(#gCtlC)"/>
<path d="M816 259L798 329.5" stroke="#c8c8cc" stroke-width="1.1" fill="none"/>
<path d="M859 263H891L872 318Q866 326 852 327L843 326Z" fill="url(#gCtlR)"/>
<path d="M772 250.5H891L893 257L891 264H772Z" fill="#c0c0c4"/>
<path d="M772 234H872V250.5H772Z" fill="#2a2a2d"/>
<path d="M772 240Q790 236 808 240L816 250.5H772Z" fill="#a9a9ad"/>
<path d="M785.5 243L806 241.5L810.5 247L806 250.7L789 250.3Z" fill="#2b2b2e"/><circle cx="797" cy="245.2" r="0.9" fill="#ddd"/>
<path d="M816 236H858V250.5H816Z" fill="#141416"/>
<path d="M858 240L870 238L872 250.5H856Z" fill="#9aa2aa"/>
<path d="M889 234H904V264H891L896 252Z" fill="#fafafb"/>
<path d="M868 241L884 239L893 252L887 259L870 257Z" fill="#c6c6ca"/>
<path d="M772 332Q800 333 852 327Q866 326 870 321L876 330Q860 337 800 337H772Z" fill="#dcdcde" opacity="0.7"/>
<path d="M818.9 277.5L847.4 277L845.8 285.3L818 285.8Z" fill="#2b2b2e"/>
<ellipse cx="881.2" cy="247.8" rx="16.2" ry="12" fill="none" stroke="#ef6a1c" stroke-width="2.6" transform="rotate(6 881.2 247.8)"/>
<rect x="937" y="215" width="130" height="130" fill="#19171a"/>
<path d="M962 247.5Q1001 243 1040 247.5Q1044.5 248.5 1044.5 253V299Q1044.5 303 1035 306.5H968Q958 303 958 299V253Q958 248.5 962 247.5Z" fill="#b9b9bb"/>
<path d="M958 296Q1001 299 1044.5 296V299Q1044.5 303 1035 306.5H968Q958 303 958 299Z" fill="#b4b4b6"/>
<g><circle cx="973.6" cy="261.8" r="7.3" fill="#e8e8ea"/><circle cx="973.6" cy="261.8" r="5.6" fill="#2d2d30"/><circle cx="973.6" cy="261.8" r="1.5" fill="#888"/><circle cx="1028.3" cy="261.8" r="7.3" fill="#e8e8ea"/><circle cx="1028.3" cy="261.8" r="5.6" fill="#2d2d30"/><circle cx="1028.3" cy="261.8" r="1.5" fill="#888"/><circle cx="986" cy="278.6" r="3.2" fill="none" stroke="#8a8a8c" stroke-width="1"/><circle cx="1016.3" cy="278.6" r="3.2" fill="none" stroke="#8a8a8c" stroke-width="1"/><rect x="996.5" y="276.5" width="7" height="4" rx="1.5" fill="#3a3a3c"/><circle cx="962" cy="257.5" r="1.6" fill="#555"/><circle cx="1040" cy="257.5" r="1.6" fill="#555"/><path d="M997 262.5Q1001 259 1005 262.5" stroke="#f4f4f4" stroke-width="1.4" fill="none"/></g>
<path d="M1120 218H1185L1212.5 246V341H1120Z" fill="#f9f8fb" stroke="#6f6e72" stroke-width="1.6"/>
<path d="M1185 218V246H1212.5Z" fill="#f7f6f9" stroke="#6f6e72" stroke-width="1.2" stroke-linejoin="round"/>
<path d="M1277.2 210.3H1351.4L1380.8 239.9V349.3H1277.2Z" fill="#f6f5f8"/><path d="M1351.4 210.3V239.9H1380.8Z" fill="#dcdbdf"/>
<g transform="translate(1298,248.8) scale(0.5482,0.5550)" fill="#4b8bae" fill-rule="evenodd"><path d="M54.9 0.9c-4.6 0-9 0.4-12.8 1.1C30.8 4 28.8 8.2 28.8 15.9v10.2h26.6v3.4H18.8c-7.7 0-14.5 4.6-16.6 13.5-2.4 10.2-2.5 16.5 0 27.2 1.9 7.9 6.4 13.5 14.1 13.5h9.1V71.5c0-8.8 7.6-16.6 16.6-16.6h26.6c7.4 0 13.3-6.1 13.3-13.5V15.9c0-7.2-6.1-12.7-13.3-13.8C63.9 1.4 59.4 0.9 54.9 0.9z M40.5 9.1c2.8 0 5 2.3 5 5.1 0 2.8-2.2 5-5 5-2.8 0-5-2.3-5-5 0-2.8 2.2-5.1 5-5.1z"/><path d="M85.4 29.5v12.4c0 9.6-8.2 17.7-17.5 17.7H41.3c-7.3 0-13.3 6.2-13.3 13.5v25.3c0 7.2 6.3 11.4 13.3 13.5 8.4 2.5 16.5 2.9 26.6 0 6.7-1.9 13.3-5.8 13.3-13.5V88.2H54.6v-3.4h39.9c7.7 0 10.6-5.4 13.3-13.5 2.8-8.3 2.7-16.3 0-27.2-1.9-7.8-5.6-13.5-13.3-13.5z M70.5 93.7c2.8 0 5 2.3 5 5 0 2.8-2.2 5.1-5 5.1-2.8 0-5-2.3-5-5.1 0-2.8 2.3-5 5-5z"/></g>
<g transform="translate(1346,315.8) scale(0.2800,0.2740)"><path d="M96.46 10.8L75.86.87a6.23 6.23 0 0 0-7.1 1.21L29.35 38.03 12.19 25.01a4.16 4.16 0 0 0-5.32.24L1.36 30.26a4.16 4.16 0 0 0 0 6.16L16.25 50 1.36 63.58a4.16 4.16 0 0 0 0 6.16l5.51 5.01a4.16 4.16 0 0 0 5.32.24l17.16-13.020 39.41 35.95a6.23 6.23 0 0 0 7.1 1.21l20.6-9.92A6.24 6.24 0 0 0 100 83.6V16.4a6.24 6.24 0 0 0-3.540-5.6zM75.01 72.7L45.11 50l29.9-22.7z" fill="#1684d8"/><path d="M68.8 2.1Q72 -0.5 75.9 0.9L96.5 10.8Q100 12.5 100 16.4V83.6Q100 87.5 96.5 89.2L75.9 99.1Q72 100.5 68.8 97.9L75 72.7V27.3Z" fill="#2aa4ee"/></g>
<path d="M136 414.2H209.9L239.6 443.5V553.5H136Z" fill="#f6f5f8"/><path d="M209.9 414.2V443.5H239.6Z" fill="#dcdbdf"/>
<path d="M173.8 453.8L190.1 463L205.9 453.8V486.3H217.6L190.1 514L162.5 486.3H173.8Z" fill="#4a8aa8"/>
<g transform="translate(204.9,520.3) scale(0.2760,0.2700)"><path d="M96.46 10.8L75.86.87a6.23 6.23 0 0 0-7.1 1.21L29.35 38.03 12.19 25.01a4.16 4.16 0 0 0-5.32.24L1.36 30.26a4.16 4.16 0 0 0 0 6.16L16.25 50 1.36 63.58a4.16 4.16 0 0 0 0 6.16l5.51 5.01a4.16 4.16 0 0 0 5.32.24l17.16-13.020 39.41 35.95a6.23 6.23 0 0 0 7.1 1.21l20.6-9.92A6.24 6.24 0 0 0 100 83.6V16.4a6.24 6.24 0 0 0-3.540-5.6zM75.01 72.7L45.11 50l29.9-22.7z" fill="#1684d8"/><path d="M68.8 2.1Q72 -0.5 75.9 0.9L96.5 10.8Q100 12.5 100 16.4V83.6Q100 87.5 96.5 89.2L75.9 99.1Q72 100.5 68.8 97.9L75 72.7V27.3Z" fill="#2aa4ee"/></g>
<defs><linearGradient id="gMono" x1="0" y1="0" x2="0.3" y2="1"><stop offset="0" stop-color="#9a4ccf"/><stop offset="0.5" stop-color="#8845c6"/><stop offset="1" stop-color="#7a3ebb"/></linearGradient><radialGradient id="gMonoSh" cx="0.5" cy="0.5" r="0.5"><stop offset="0" stop-color="#4a2380" stop-opacity="0.7"/><stop offset="1" stop-color="#4a2380" stop-opacity="0"/></radialGradient></defs>
<rect x="1432" y="212" width="115" height="132" fill="url(#gMono)"/>
<ellipse cx="1489" cy="316" rx="34" ry="7" fill="url(#gMonoSh)"/>
<rect x="1466" y="219.5" width="45" height="2.2" fill="#dcc8f0" opacity="0.75"/><rect x="1470" y="225" width="37" height="1.4" fill="#a880d0" opacity="0.6"/>
<path d="M1475 257L1480 245L1486 257Z M1495 257L1504 250L1503 258Z" fill="#f4f0f8" stroke="#111" stroke-width="1"/>
<rect x="1460" y="256.5" width="56" height="55.5" rx="6" fill="#ffffff" stroke="#111" stroke-width="1.6"/>
<path d="M1467.00 275.39h1.45v1.45h-1.45z M1467.00 279.73h1.45v1.45h-1.45z M1467.00 281.18h1.45v1.45h-1.45z M1467.00 284.08h1.45v1.45h-1.45z M1467.00 285.52h1.45v1.45h-1.45z M1467.00 289.87h1.45v1.45h-1.45z M1467.00 291.32h1.45v1.45h-1.45z M1467.00 292.77h1.45v1.45h-1.45z M1468.45 276.83h1.45v1.45h-1.45z M1468.45 284.08h1.45v1.45h-1.45z M1468.45 285.52h1.45v1.45h-1.45z M1468.45 286.97h1.45v1.45h-1.45z M1468.45 288.42h1.45v1.45h-1.45z M1468.45 289.87h1.45v1.45h-1.45z M1468.45 291.32h1.45v1.45h-1.45z M1468.45 292.77h1.45v1.45h-1.45z M1468.45 294.21h1.45v1.45h-1.45z M1469.90 275.39h1.45v1.45h-1.45z M1469.90 278.28h1.45v1.45h-1.45z M1469.90 281.18h1.45v1.45h-1.45z M1469.90 284.08h1.45v1.45h-1.45z M1469.90 285.52h1.45v1.45h-1.45z M1469.90 292.77h1.45v1.45h-1.45z M1469.90 294.21h1.45v1.45h-1.45z M1471.34 275.39h1.45v1.45h-1.45z M1471.34 276.83h1.45v1.45h-1.45z M1471.34 279.73h1.45v1.45h-1.45z M1471.34 282.63h1.45v1.45h-1.45z M1471.34 286.97h1.45v1.45h-1.45z M1471.34 288.42h1.45v1.45h-1.45z M1471.34 291.32h1.45v1.45h-1.45z M1471.34 294.21h1.45v1.45h-1.45z M1472.79 275.39h1.45v1.45h-1.45z M1472.79 279.73h1.45v1.45h-1.45z M1472.79 281.18h1.45v1.45h-1.45z M1472.79 282.63h1.45v1.45h-1.45z M1472.79 286.97h1.45v1.45h-1.45z M1472.79 288.42h1.45v1.45h-1.45z M1472.79 289.87h1.45v1.45h-1.45z M1472.79 291.32h1.45v1.45h-1.45z M1472.79 294.21h1.45v1.45h-1.45z M1474.24 276.83h1.45v1.45h-1.45z M1474.24 278.28h1.45v1.45h-1.45z M1474.24 281.18h1.45v1.45h-1.45z M1474.24 284.08h1.45v1.45h-1.45z M1474.24 285.52h1.45v1.45h-1.45z M1474.24 286.97h1.45v1.45h-1.45z M1474.24 288.42h1.45v1.45h-1.45z M1474.24 292.77h1.45v1.45h-1.45z M1475.69 275.39h1.45v1.45h-1.45z M1475.69 276.83h1.45v1.45h-1.45z M1475.69 281.18h1.45v1.45h-1.45z M1475.69 284.08h1.45v1.45h-1.45z M1475.69 285.52h1.45v1.45h-1.45z M1475.69 288.42h1.45v1.45h-1.45z M1475.69 289.87h1.45v1.45h-1.45z M1475.69 291.32h1.45v1.45h-1.45z M1475.69 292.77h1.45v1.45h-1.45z M1477.14 275.39h1.45v1.45h-1.45z M1477.14 278.28h1.45v1.45h-1.45z M1477.14 279.73h1.45v1.45h-1.45z M1477.14 282.63h1.45v1.45h-1.45z M1477.14 286.97h1.45v1.45h-1.45z M1477.14 288.42h1.45v1.45h-1.45z M1477.14 292.77h1.45v1.45h-1.45z M1477.14 294.21h1.45v1.45h-1.45z M1478.59 266.70h1.45v1.45h-1.45z M1478.59 272.49h1.45v1.45h-1.45z M1478.59 273.94h1.45v1.45h-1.45z M1478.59 275.39h1.45v1.45h-1.45z M1478.59 278.28h1.45v1.45h-1.45z M1478.59 281.18h1.45v1.45h-1.45z M1478.59 285.52h1.45v1.45h-1.45z M1478.59 286.97h1.45v1.45h-1.45z M1478.59 289.87h1.45v1.45h-1.45z M1478.59 291.32h1.45v1.45h-1.45z M1478.59 297.11h1.45v1.45h-1.45z M1478.59 300.01h1.45v1.45h-1.45z M1478.59 301.46h1.45v1.45h-1.45z M1478.59 302.90h1.45v1.45h-1.45z M1478.59 304.35h1.45v1.45h-1.45z M1480.03 263.80h1.45v1.45h-1.45z M1480.03 265.25h1.45v1.45h-1.45z M1480.03 266.70h1.45v1.45h-1.45z M1480.03 269.59h1.45v1.45h-1.45z M1480.03 271.04h1.45v1.45h-1.45z M1480.03 279.73h1.45v1.45h-1.45z M1480.03 281.18h1.45v1.45h-1.45z M1480.03 282.63h1.45v1.45h-1.45z M1480.03 288.42h1.45v1.45h-1.45z M1480.03 291.32h1.45v1.45h-1.45z M1480.03 294.21h1.45v1.45h-1.45z M1480.03 297.11h1.45v1.45h-1.45z M1480.03 298.56h1.45v1.45h-1.45z M1481.48 266.70h1.45v1.45h-1.45z M1481.48 272.49h1.45v1.45h-1.45z M1481.48 279.73h1.45v1.45h-1.45z M1481.48 284.08h1.45v1.45h-1.45z M1481.48 291.32h1.45v1.45h-1.45z M1481.48 295.66h1.45v1.45h-1.45z M1481.48 298.56h1.45v1.45h-1.45z M1481.48 301.46h1.45v1.45h-1.45z M1481.48 304.35h1.45v1.45h-1.45z M1482.93 263.80h1.45v1.45h-1.45z M1482.93 266.70h1.45v1.45h-1.45z M1482.93 271.04h1.45v1.45h-1.45z M1482.93 272.49h1.45v1.45h-1.45z M1482.93 273.94h1.45v1.45h-1.45z M1482.93 276.83h1.45v1.45h-1.45z M1482.93 278.28h1.45v1.45h-1.45z M1482.93 282.63h1.45v1.45h-1.45z M1482.93 285.52h1.45v1.45h-1.45z M1482.93 288.42h1.45v1.45h-1.45z M1482.93 289.87h1.45v1.45h-1.45z M1482.93 295.66h1.45v1.45h-1.45z M1482.93 298.56h1.45v1.45h-1.45z M1482.93 300.01h1.45v1.45h-1.45z M1482.93 301.46h1.45v1.45h-1.45z M1484.38 266.70h1.45v1.45h-1.45z M1484.38 268.14h1.45v1.45h-1.45z M1484.38 269.59h1.45v1.45h-1.45z M1484.38 271.04h1.45v1.45h-1.45z M1484.38 272.49h1.45v1.45h-1.45z M1484.38 273.94h1.45v1.45h-1.45z M1484.38 276.83h1.45v1.45h-1.45z M1484.38 278.28h1.45v1.45h-1.45z M1484.38 282.63h1.45v1.45h-1.45z M1484.38 284.08h1.45v1.45h-1.45z M1484.38 285.52h1.45v1.45h-1.45z M1484.38 288.42h1.45v1.45h-1.45z M1484.38 292.77h1.45v1.45h-1.45z M1484.38 295.66h1.45v1.45h-1.45z M1484.38 297.11h1.45v1.45h-1.45z M1484.38 298.56h1.45v1.45h-1.45z M1484.38 300.01h1.45v1.45h-1.45z M1484.38 302.90h1.45v1.45h-1.45z M1484.38 304.35h1.45v1.45h-1.45z M1485.83 263.80h1.45v1.45h-1.45z M1485.83 266.70h1.45v1.45h-1.45z M1485.83 275.39h1.45v1.45h-1.45z M1485.83 276.83h1.45v1.45h-1.45z M1485.83 278.28h1.45v1.45h-1.45z M1485.83 279.73h1.45v1.45h-1.45z M1485.83 281.18h1.45v1.45h-1.45z M1485.83 284.08h1.45v1.45h-1.45z M1485.83 285.52h1.45v1.45h-1.45z M1485.83 286.97h1.45v1.45h-1.45z M1485.83 289.87h1.45v1.45h-1.45z M1485.83 294.21h1.45v1.45h-1.45z M1485.83 298.56h1.45v1.45h-1.45z M1485.83 302.90h1.45v1.45h-1.45z M1485.83 304.35h1.45v1.45h-1.45z M1487.28 266.70h1.45v1.45h-1.45z M1487.28 273.94h1.45v1.45h-1.45z M1487.28 276.83h1.45v1.45h-1.45z M1487.28 284.08h1.45v1.45h-1.45z M1487.28 289.87h1.45v1.45h-1.45z M1487.28 292.77h1.45v1.45h-1.45z M1487.28 297.11h1.45v1.45h-1.45z M1487.28 298.56h1.45v1.45h-1.45z M1487.28 300.01h1.45v1.45h-1.45z M1487.28 304.35h1.45v1.45h-1.45z M1488.72 263.80h1.45v1.45h-1.45z M1488.72 266.70h1.45v1.45h-1.45z M1488.72 269.59h1.45v1.45h-1.45z M1488.72 271.04h1.45v1.45h-1.45z M1488.72 273.94h1.45v1.45h-1.45z M1488.72 275.39h1.45v1.45h-1.45z M1488.72 276.83h1.45v1.45h-1.45z M1488.72 284.08h1.45v1.45h-1.45z M1488.72 286.97h1.45v1.45h-1.45z M1488.72 288.42h1.45v1.45h-1.45z M1488.72 289.87h1.45v1.45h-1.45z M1488.72 291.32h1.45v1.45h-1.45z M1488.72 295.66h1.45v1.45h-1.45z M1488.72 300.01h1.45v1.45h-1.45z M1488.72 301.46h1.45v1.45h-1.45z M1490.17 263.80h1.45v1.45h-1.45z M1490.17 268.14h1.45v1.45h-1.45z M1490.17 271.04h1.45v1.45h-1.45z M1490.17 272.49h1.45v1.45h-1.45z M1490.17 273.94h1.45v1.45h-1.45z M1490.17 276.83h1.45v1.45h-1.45z M1490.17 279.73h1.45v1.45h-1.45z M1490.17 281.18h1.45v1.45h-1.45z M1490.17 285.52h1.45v1.45h-1.45z M1490.17 288.42h1.45v1.45h-1.45z M1490.17 289.87h1.45v1.45h-1.45z M1490.17 291.32h1.45v1.45h-1.45z M1490.17 295.66h1.45v1.45h-1.45z M1490.17 297.11h1.45v1.45h-1.45z M1490.17 298.56h1.45v1.45h-1.45z M1490.17 300.01h1.45v1.45h-1.45z M1490.17 304.35h1.45v1.45h-1.45z M1491.62 263.80h1.45v1.45h-1.45z M1491.62 265.25h1.45v1.45h-1.45z M1491.62 269.59h1.45v1.45h-1.45z M1491.62 272.49h1.45v1.45h-1.45z M1491.62 273.94h1.45v1.45h-1.45z M1491.62 275.39h1.45v1.45h-1.45z M1491.62 278.28h1.45v1.45h-1.45z M1491.62 279.73h1.45v1.45h-1.45z M1491.62 282.63h1.45v1.45h-1.45z M1491.62 285.52h1.45v1.45h-1.45z M1491.62 286.97h1.45v1.45h-1.45z M1491.62 288.42h1.45v1.45h-1.45z M1491.62 289.87h1.45v1.45h-1.45z M1491.62 291.32h1.45v1.45h-1.45z M1491.62 292.77h1.45v1.45h-1.45z M1491.62 294.21h1.45v1.45h-1.45z M1491.62 295.66h1.45v1.45h-1.45z M1491.62 297.11h1.45v1.45h-1.45z M1491.62 298.56h1.45v1.45h-1.45z M1491.62 300.01h1.45v1.45h-1.45z M1491.62 304.35h1.45v1.45h-1.45z M1493.07 268.14h1.45v1.45h-1.45z M1493.07 273.94h1.45v1.45h-1.45z M1493.07 275.39h1.45v1.45h-1.45z M1493.07 278.28h1.45v1.45h-1.45z M1493.07 282.63h1.45v1.45h-1.45z M1493.07 284.08h1.45v1.45h-1.45z M1493.07 286.97h1.45v1.45h-1.45z M1493.07 288.42h1.45v1.45h-1.45z M1493.07 291.32h1.45v1.45h-1.45z M1493.07 294.21h1.45v1.45h-1.45z M1493.07 295.66h1.45v1.45h-1.45z M1493.07 298.56h1.45v1.45h-1.45z M1493.07 300.01h1.45v1.45h-1.45z M1494.52 263.80h1.45v1.45h-1.45z M1494.52 265.25h1.45v1.45h-1.45z M1494.52 268.14h1.45v1.45h-1.45z M1494.52 271.04h1.45v1.45h-1.45z M1494.52 272.49h1.45v1.45h-1.45z M1494.52 273.94h1.45v1.45h-1.45z M1494.52 275.39h1.45v1.45h-1.45z M1494.52 278.28h1.45v1.45h-1.45z M1494.52 281.18h1.45v1.45h-1.45z M1494.52 282.63h1.45v1.45h-1.45z M1494.52 284.08h1.45v1.45h-1.45z M1494.52 289.87h1.45v1.45h-1.45z M1494.52 291.32h1.45v1.45h-1.45z M1494.52 294.21h1.45v1.45h-1.45z M1494.52 297.11h1.45v1.45h-1.45z M1494.52 298.56h1.45v1.45h-1.45z M1494.52 300.01h1.45v1.45h-1.45z M1494.52 301.46h1.45v1.45h-1.45z M1494.52 304.35h1.45v1.45h-1.45z M1495.97 266.70h1.45v1.45h-1.45z M1495.97 268.14h1.45v1.45h-1.45z M1495.97 271.04h1.45v1.45h-1.45z M1495.97 272.49h1.45v1.45h-1.45z M1495.97 273.94h1.45v1.45h-1.45z M1495.97 275.39h1.45v1.45h-1.45z M1495.97 276.83h1.45v1.45h-1.45z M1495.97 285.52h1.45v1.45h-1.45z M1495.97 288.42h1.45v1.45h-1.45z M1495.97 292.77h1.45v1.45h-1.45z M1495.97 300.01h1.45v1.45h-1.45z M1497.41 266.70h1.45v1.45h-1.45z M1497.41 269.59h1.45v1.45h-1.45z M1497.41 271.04h1.45v1.45h-1.45z M1497.41 272.49h1.45v1.45h-1.45z M1497.41 273.94h1.45v1.45h-1.45z M1497.41 275.39h1.45v1.45h-1.45z M1497.41 279.73h1.45v1.45h-1.45z M1497.41 284.08h1.45v1.45h-1.45z M1497.41 288.42h1.45v1.45h-1.45z M1497.41 289.87h1.45v1.45h-1.45z M1497.41 298.56h1.45v1.45h-1.45z M1497.41 302.90h1.45v1.45h-1.45z M1497.41 304.35h1.45v1.45h-1.45z M1498.86 275.39h1.45v1.45h-1.45z M1498.86 276.83h1.45v1.45h-1.45z M1498.86 278.28h1.45v1.45h-1.45z M1498.86 279.73h1.45v1.45h-1.45z M1498.86 281.18h1.45v1.45h-1.45z M1498.86 285.52h1.45v1.45h-1.45z M1498.86 294.21h1.45v1.45h-1.45z M1498.86 298.56h1.45v1.45h-1.45z M1498.86 301.46h1.45v1.45h-1.45z M1498.86 302.90h1.45v1.45h-1.45z M1498.86 304.35h1.45v1.45h-1.45z M1500.31 275.39h1.45v1.45h-1.45z M1500.31 278.28h1.45v1.45h-1.45z M1500.31 281.18h1.45v1.45h-1.45z M1500.31 282.63h1.45v1.45h-1.45z M1500.31 285.52h1.45v1.45h-1.45z M1500.31 286.97h1.45v1.45h-1.45z M1500.31 291.32h1.45v1.45h-1.45z M1500.31 294.21h1.45v1.45h-1.45z M1500.31 295.66h1.45v1.45h-1.45z M1500.31 297.11h1.45v1.45h-1.45z M1500.31 298.56h1.45v1.45h-1.45z M1500.31 300.01h1.45v1.45h-1.45z M1500.31 302.90h1.45v1.45h-1.45z M1501.76 276.83h1.45v1.45h-1.45z M1501.76 281.18h1.45v1.45h-1.45z M1501.76 284.08h1.45v1.45h-1.45z M1501.76 285.52h1.45v1.45h-1.45z M1501.76 288.42h1.45v1.45h-1.45z M1501.76 289.87h1.45v1.45h-1.45z M1501.76 294.21h1.45v1.45h-1.45z M1501.76 300.01h1.45v1.45h-1.45z M1501.76 302.90h1.45v1.45h-1.45z M1501.76 304.35h1.45v1.45h-1.45z M1503.21 275.39h1.45v1.45h-1.45z M1503.21 276.83h1.45v1.45h-1.45z M1503.21 278.28h1.45v1.45h-1.45z M1503.21 279.73h1.45v1.45h-1.45z M1503.21 282.63h1.45v1.45h-1.45z M1503.21 284.08h1.45v1.45h-1.45z M1503.21 286.97h1.45v1.45h-1.45z M1503.21 289.87h1.45v1.45h-1.45z M1503.21 295.66h1.45v1.45h-1.45z M1503.21 297.11h1.45v1.45h-1.45z M1503.21 302.90h1.45v1.45h-1.45z M1503.21 304.35h1.45v1.45h-1.45z M1504.66 282.63h1.45v1.45h-1.45z M1504.66 284.08h1.45v1.45h-1.45z M1504.66 289.87h1.45v1.45h-1.45z M1504.66 291.32h1.45v1.45h-1.45z M1504.66 292.77h1.45v1.45h-1.45z M1504.66 294.21h1.45v1.45h-1.45z M1504.66 297.11h1.45v1.45h-1.45z M1504.66 298.56h1.45v1.45h-1.45z M1504.66 300.01h1.45v1.45h-1.45z M1504.66 301.46h1.45v1.45h-1.45z M1506.10 276.83h1.45v1.45h-1.45z M1506.10 278.28h1.45v1.45h-1.45z M1506.10 279.73h1.45v1.45h-1.45z M1506.10 281.18h1.45v1.45h-1.45z M1506.10 285.52h1.45v1.45h-1.45z M1506.10 286.97h1.45v1.45h-1.45z M1506.10 292.77h1.45v1.45h-1.45z M1506.10 294.21h1.45v1.45h-1.45z M1506.10 295.66h1.45v1.45h-1.45z M1506.10 298.56h1.45v1.45h-1.45z M1506.10 302.90h1.45v1.45h-1.45z M1506.10 304.35h1.45v1.45h-1.45z M1507.55 278.28h1.45v1.45h-1.45z M1507.55 279.73h1.45v1.45h-1.45z M1507.55 281.18h1.45v1.45h-1.45z M1507.55 284.08h1.45v1.45h-1.45z M1507.55 285.52h1.45v1.45h-1.45z M1507.55 288.42h1.45v1.45h-1.45z M1507.55 291.32h1.45v1.45h-1.45z M1507.55 294.21h1.45v1.45h-1.45z M1507.55 295.66h1.45v1.45h-1.45z M1507.55 298.56h1.45v1.45h-1.45z M1507.55 300.01h1.45v1.45h-1.45z M1507.55 304.35h1.45v1.45h-1.45z M1467.00 263.80h10.14v10.14h-10.14z M1468.45 265.25v7.24h7.24v-7.24z M1469.90 266.70h4.34v4.34h-4.34z M1498.86 263.80h10.14v10.14h-10.14z M1500.31 265.25v7.24h7.24v-7.24z M1501.76 266.70h4.34v4.34h-4.34z M1467.00 295.66h10.14v10.14h-10.14z M1468.45 297.11v7.24h7.24v-7.24z M1469.90 298.56h4.34v4.34h-4.34z" fill="#111" fill-rule="evenodd"/>
<circle cx="1464" cy="260" r="4.5" fill="#fff" stroke="#111" stroke-width="1.2"/><circle cx="1517" cy="310" r="4.5" fill="#fff" stroke="#111" stroke-width="1.2"/>
<circle cx="1447" cy="254" r="5.5" fill="#a06ad8" opacity="0.8"/>
<circle cx="1537" cy="260" r="5.5" fill="#a06ad8" opacity="0.8"/>
<circle cx="1446" cy="307" r="4.5" fill="#a06ad8" opacity="0.8"/>
<circle cx="1536" cy="314" r="5.5" fill="#a06ad8" opacity="0.8"/>
<rect x="1445" y="252" width="4" height="4" fill="#5a9ad0" opacity="0.8"/><rect x="1534" y="258" width="6" height="4" fill="#d8b840" opacity="0.8"/><rect x="1444" y="305" width="4" height="4" fill="#c8a050" opacity="0.7"/><rect x="1534" y="312" width="4" height="5" fill="#f0a020" opacity="0.85"/>
<text x="1467" y="336" font-size="11" fill="#f6eefc" font-weight="bold" textLength="43" lengthAdjust="spacingAndGlyphs" font-family="Liberation Sans" >monobank</text>
<defs><linearGradient id="gP1" x1="0" y1="0" x2="1" y2="0.2"><stop offset="0" stop-color="#4e5664"/><stop offset="0.45" stop-color="#7d8898"/><stop offset="1" stop-color="#a2adbb"/></linearGradient><linearGradient id="gP2" x1="0" y1="0" x2="1" y2="1"><stop offset="0" stop-color="#4d6a8e"/><stop offset="0.6" stop-color="#62809f"/><stop offset="1" stop-color="#97a6b8"/></linearGradient></defs>
<rect x="1587" y="294" width="132" height="50" fill="url(#gP1)"/>
<rect x="1587" y="294" width="132" height="1.2" fill="#3b4452"/>
<rect x="1591" y="301" width="36" height="36.5" fill="#2e3034" opacity="0.85"/>
<rect x="1629" y="300" width="38" height="37.5" fill="#17191e" stroke="#6f7436" stroke-width="0.8"/>
<rect x="1669.6" y="301" width="36.2" height="36" fill="#1b1e24"/>
<rect x="1651" y="302.3" width="13" height="2" fill="#d8d22a"/><rect x="1679" y="303" width="24" height="1.8" fill="#c4c6ca"/>
<rect x="1612" y="302.5" width="13" height="1.4" fill="#8a8a8a"/><rect x="1602" y="305.5" width="23" height="1.4" fill="#808080"/>
<rect x="1651" y="317" width="10" height="1.2" fill="#666"/><rect x="1650" y="324.5" width="14" height="1.6" fill="#b8b8b8"/><rect x="1652" y="328" width="11" height="1.2" fill="#555"/><rect x="1613" y="330" width="11" height="1.3" fill="#888"/><rect x="1693" y="333.5" width="10" height="1.4" fill="#bbb"/>
<path d="M1632 323.5L1635 325L1632 326.5Z M1594 328.5L1597 330L1594 331.5Z M1672 333L1675 334.5L1672 336Z" fill="#ddd"/>
<circle cx="1656" cy="340.5" r="1.5" fill="#2233cc"/>
<rect x="1750" y="269" width="132" height="75" fill="url(#gP2)"/>
<rect x="1752" y="272" width="32" height="3.4" rx="1" fill="#d8dc20"/><rect x="1754" y="273" width="16" height="1.2" fill="#444"/>
<rect x="1754" y="278" width="28" height="27.2" fill="#13161c"/>
<rect x="1754" y="308" width="28" height="28" fill="#181c24"/>
<rect x="1784.3" y="278" width="28" height="27.2" fill="#13161c"/>
<rect x="1784.3" y="308" width="28" height="28" fill="#181c24"/>
<rect x="1814.4" y="278" width="28" height="27.2" fill="#13161c"/>
<rect x="1814.4" y="308" width="28" height="28" fill="#181c24"/>
<rect x="1844.5" y="278" width="28" height="27.2" fill="#13161c"/>
<rect x="1844.5" y="308" width="28" height="28" fill="#181c24"/>
<rect x="1764" y="283" width="9" height="6" rx="2" fill="#d0d0d0"/><rect x="1764" y="290" width="10" height="4" fill="#bbb"/><rect x="1770" y="297" width="10" height="1.6" fill="#d4d424"/><rect x="1773" y="300.5" width="7" height="1.6" fill="#d4d424"/>
<rect x="1794" y="280.5" width="16" height="1.4" fill="#bbb"/><rect x="1790" y="283" width="20" height="1.4" fill="#aaa"/><rect x="1800" y="298" width="8" height="1.2" fill="#999"/>
<rect x="1818" y="280.5" width="22" height="1.4" fill="#aaa"/><rect x="1819" y="283" width="20" height="1.4" fill="#aaa"/><ellipse cx="1827" cy="295" rx="6" ry="4" fill="#e0dc60"/><rect x="1823" y="290" width="8" height="3" fill="#ddd"/>
<rect x="1853" y="282" width="10" height="7" rx="2" fill="#e0e0e0"/><path d="M1850 282L1854 286M1866 282L1862 286" stroke="#c8d030" stroke-width="1.2"/><rect x="1848" y="296" width="21" height="1.6" fill="#ddd"/><rect x="1849" y="299.5" width="19" height="1.6" fill="#ddd"/>
<rect x="1756" y="310" width="13" height="1.5" fill="#c8c8c8"/><rect x="1756" y="318" width="11" height="1.2" fill="#999"/><rect x="1756" y="322" width="22" height="2.2" fill="#5a5e66"/><rect x="1756" y="332" width="8" height="1.3" fill="#999"/><rect x="1776" y="331" width="3" height="3" fill="none" stroke="#aaa" stroke-width="0.6"/>
<rect x="1786.3" y="310" width="13" height="1.5" fill="#c8c8c8"/><rect x="1786.3" y="318" width="11" height="1.2" fill="#999"/><rect x="1786.3" y="322" width="22" height="2.2" fill="#5a5e66"/><rect x="1786.3" y="332" width="8" height="1.3" fill="#999"/><rect x="1806.3" y="331" width="3" height="3" fill="none" stroke="#aaa" stroke-width="0.6"/>
<rect x="1816.4" y="310" width="13" height="1.5" fill="#c8c8c8"/><rect x="1816.4" y="318" width="11" height="1.2" fill="#999"/><rect x="1816.4" y="322" width="22" height="2.2" fill="#5a5e66"/><rect x="1816.4" y="332" width="8" height="1.3" fill="#999"/><rect x="1836.4" y="331" width="3" height="3" fill="none" stroke="#aaa" stroke-width="0.6"/>
<rect x="1846.5" y="310" width="13" height="1.5" fill="#c8c8c8"/><rect x="1846.5" y="318" width="11" height="1.2" fill="#999"/><rect x="1846.5" y="322" width="22" height="2.2" fill="#5a5e66"/><rect x="1846.5" y="332" width="8" height="1.3" fill="#999"/><rect x="1866.5" y="331" width="3" height="3" fill="none" stroke="#aaa" stroke-width="0.6"/>
<rect x="1869.5" y="316" width="1.8" height="19" fill="#a8c830"/><rect x="1810" y="316" width="1.8" height="19" fill="#a8c830"/>
<rect x="1878" y="336" width="4" height="8" fill="#3a4150"/>
<defs><linearGradient id="gGear1" x1="0" y1="0" x2="1" y2="1"><stop offset="0" stop-color="#a3a5aa"/><stop offset="1" stop-color="#85878c"/></linearGradient><linearGradient id="gGear2" x1="0" y1="0" x2="1" y2="1"><stop offset="0" stop-color="#6a6d70"/><stop offset="1" stop-color="#4f5255"/></linearGradient></defs>
<rect x="279.5" y="430.3" width="142.7" height="106.8" rx="3.5" fill="#7a797d"/>
<rect x="281.3" y="435.8" width="139.1" height="99.5" rx="2" fill="#fbfbfd"/>
<g fill="#d0d0d2"><circle cx="407" cy="433" r="0.9"/><circle cx="410.5" cy="433" r="0.9"/><circle cx="414" cy="433" r="0.9"/></g>
<path d="M334.89 457.89 L336.04 451.84 L343.76 451.84 L344.91 457.89 L350.74 461.26 L356.55 459.23 L360.41 465.92 L355.75 469.93 L355.75 476.67 L360.41 480.68 L356.55 487.37 L350.74 485.34 L344.91 488.71 L343.76 494.76 L336.04 494.76 L334.89 488.71 L329.06 485.34 L323.25 487.37 L319.39 480.68 L324.05 476.67 L324.05 469.93 L319.39 465.92 L323.25 459.23 L329.06 461.26Z M346.10 473.30 A6.2 6.2 0 1 0 333.70 473.30 A6.2 6.2 0 1 0 346.10 473.30Z" fill="url(#gGear1)" fill-rule="evenodd" stroke="url(#gGear1)" stroke-width="2" stroke-linejoin="round"/>
<path d="M363.49 495.39 L364.33 490.86 L370.07 490.86 L370.91 495.39 L375.23 497.88 L379.57 496.34 L382.44 501.31 L378.94 504.31 L378.94 509.29 L382.44 512.29 L379.57 517.26 L375.23 515.72 L370.91 518.21 L370.07 522.74 L364.33 522.74 L363.49 518.21 L359.17 515.72 L354.83 517.26 L351.96 512.29 L355.46 509.29 L355.46 504.31 L351.96 501.31 L354.83 496.34 L359.17 497.88Z M372.60 506.80 A5.4 5.4 0 1 0 361.80 506.80 A5.4 5.4 0 1 0 372.60 506.80Z" fill="url(#gGear2)" fill-rule="evenodd" stroke="url(#gGear2)" stroke-width="2" stroke-linejoin="round"/>
<text x="169.1" y="372" font-size="18.5" fill="#f4f4f4" textLength="38.4" lengthAdjust="spacingAndGlyphs" font-family="Liberation Sans" >.idea</text>
<text x="323.1" y="372" font-size="18.5" fill="#f4f4f4" textLength="56.1" lengthAdjust="spacingAndGlyphs" font-family="Liberation Sans" >btc.jpg</text>
<text x="465.4" y="372" font-size="18.5" fill="#f4f4f4" textLength="98.5" lengthAdjust="spacingAndGlyphs" font-family="Liberation Sans" >connect.png</text>
<text x="614.4" y="372" font-size="18.5" fill="#f4f4f4" textLength="125.4" lengthAdjust="spacingAndGlyphs" font-family="Liberation Sans" >connect_ok.png</text>
<text x="794.4" y="372" font-size="18.5" fill="#f4f4f4" textLength="92.9" lengthAdjust="spacingAndGlyphs" font-family="Liberation Sans" >control.png</text>
<text x="935.8" y="372" font-size="18.5" fill="#f4f4f4" textLength="136.0" lengthAdjust="spacingAndGlyphs" font-family="Liberation Sans" >DJI-RC-N1-Remo</text>
<text x="935.8" y="397" font-size="18.5" fill="#f4f4f4" textLength="136.0" lengthAdjust="spacingAndGlyphs" font-family="Liberation Sans" >te-Controller.png</text>
<text x="1133.7" y="372" font-size="18.5" fill="#f4f4f4" textLength="66.2" lengthAdjust="spacingAndGlyphs" font-family="Liberation Sans" >LICENSE</text>
<text x="1297.4" y="372" font-size="18.5" fill="#f4f4f4" textLength="64.0" lengthAdjust="spacingAndGlyphs" font-family="Liberation Sans" >main.py</text>
<text x="1440.3" y="372" font-size="18.5" fill="#f4f4f4" textLength="104.2" lengthAdjust="spacingAndGlyphs" font-family="Liberation Sans" >monoQR.jpg</text>
<text x="1607.2" y="372" font-size="18.5" fill="#f4f4f4" textLength="96.0" lengthAdjust="spacingAndGlyphs" font-family="Liberation Sans" >preset1.png</text>
<text x="1770.7" y="372" font-size="18.5" fill="#f4f4f4" textLength="95.3" lengthAdjust="spacingAndGlyphs" font-family="Liberation Sans" >preset2.png</text>
<text x="137.3" y="576" font-size="18.5" fill="#f4f4f4" textLength="101.9" lengthAdjust="spacingAndGlyphs" font-family="Liberation Sans" >README.md</text>
<text x="318.2" y="576" font-size="18.5" fill="#f4f4f4" textLength="66.8" lengthAdjust="spacingAndGlyphs" font-family="Liberation Sans" >start.bat</text>
<rect x="0" y="964.5" width="55.6" height="47" fill="#353436"/>
<text x="-7.6" y="995" font-size="19" fill="#ffffff" textLength="31" lengthAdjust="spacingAndGlyphs" font-family="Liberation Sans" >ster</text>
<rect x="1861.5" y="1066" width="30" height="30" fill="#4a494d"/>
<rect x="1833.3" y="1070.8" width="23.8" height="24" rx="2.5" fill="#c4c4c6"/>
<g fill="#1a1a1a"><rect x="1836.2" y="1074.8" width="18" height="1.2"/><rect x="1836.2" y="1079.8" width="18" height="1.2"/><rect x="1836.2" y="1084.8" width="18" height="1.2"/><rect x="1836.2" y="1089.7" width="18" height="1.2"/></g>
<rect x="1868" y="1073" width="26" height="26" rx="2.5" fill="#c4c4c6"/>
<rect x="1871" y="1076" width="18" height="14" fill="#ffffff" stroke="#111" stroke-width="1.2"/><rect x="1871" y="1092.5" width="18" height="1.2" fill="#111"/>
<defs><filter id="shadow" x="-20%" y="-20%" width="140%" height="140%"><feGaussianBlur stdDeviation="4"/></filter></defs>
<rect x="566" y="509" width="345" height="527" rx="8" fill="#000" opacity="0.35" filter="url(#shadow)"/>
<rect x="565" y="506" width="345" height="527" rx="6" fill="#2c2a2e" stroke="#3f3e42" stroke-width="2"/>
<rect x="570" y="765" width="334.5" height="32.5" rx="4" fill="#36343a"/>
<rect x="570" y="648.5" width="334" height="1" fill="#3e3c41"/>
<rect x="570" y="692.5" width="334" height="1" fill="#3e3c41"/>
<rect x="570" y="901.5" width="334" height="1" fill="#3e3c41"/>
<rect x="570" y="945.5" width="334" height="1" fill="#3e3c41"/>
<rect x="570" y="989.5" width="334" height="1" fill="#3e3c41"/>
<text x="618" y="535" font-size="18.5" fill="#ffffff" textLength="37.1" lengthAdjust="spacingAndGlyphs" font-family="Liberation Sans" >View</text>
<text x="617.4" y="568" font-size="18.5" fill="#ffffff" textLength="58.9" lengthAdjust="spacingAndGlyphs" font-family="Liberation Sans" >Sort by</text>
<text x="617.4" y="601" font-size="18.5" fill="#ffffff" textLength="76.2" lengthAdjust="spacingAndGlyphs" font-family="Liberation Sans" >Group by</text>
<text x="617.4" y="634" font-size="18.5" fill="#ffffff" textLength="58.4" lengthAdjust="spacingAndGlyphs" font-family="Liberation Sans" >Refresh</text>
<text x="617.4" y="678" font-size="18.5" fill="#ffffff" textLength="181.4" lengthAdjust="spacingAndGlyphs" font-family="Liberation Sans" >Customise this folder...</text>
<text x="617.4" y="722" font-size="18.5" fill="#8e8c90" textLength="41.4" lengthAdjust="spacingAndGlyphs" font-family="Liberation Sans" >Paste</text>
<text x="617.4" y="755" font-size="18.5" fill="#ffffff" textLength="94.7" lengthAdjust="spacingAndGlyphs" font-family="Liberation Sans" >Undo Move</text>
<text x="617.4" y="788" font-size="18.5" fill="#ffffff" textLength="133.5" lengthAdjust="spacingAndGlyphs" font-family="Liberation Sans" >Open in Terminal</text>
<text x="617.4" y="821" font-size="18.5" fill="#ffffff" textLength="144.5" lengthAdjust="spacingAndGlyphs" font-family="Liberation Sans" >Open Git GUI here</text>
<text x="617.4" y="854" font-size="18.5" fill="#ffffff" textLength="152.7" lengthAdjust="spacingAndGlyphs" font-family="Liberation Sans" >Open Git Bash here</text>
<text x="617.4" y="887" font-size="18.5" fill="#ffffff" textLength="129.9" lengthAdjust="spacingAndGlyphs" font-family="Liberation Sans" >Open with Code</text>
<text x="617.4" y="931" font-size="18.5" fill="#ffffff" textLength="111.3" lengthAdjust="spacingAndGlyphs" font-family="Liberation Sans" >Give access to</text>
<text x="617.4" y="975" font-size="18.5" fill="#ffffff" textLength="35.7" lengthAdjust="spacingAndGlyphs" font-family="Liberation Sans" >New</text>
<text x="617.4" y="1019" font-size="18.5" fill="#ffffff" textLength="80.3" lengthAdjust="spacingAndGlyphs" font-family="Liberation Sans" >Properties</text>
<text x="830.3" y="755" font-size="18.5" fill="#ffffff" textLength="48.5" lengthAdjust="spacingAndGlyphs" font-family="Liberation Sans" >Ctrl+Z</text>
<path d="M884.5 522.3L889.3 526.9L884.5 531.5" stroke="#e8e8e8" stroke-width="1.3" fill="none" stroke-linecap="round" stroke-linejoin="round"/>
<path d="M884.5 555.3L889.3 559.9L884.5 564.5" stroke="#e8e8e8" stroke-width="1.3" fill="none" stroke-linecap="round" stroke-linejoin="round"/>
<path d="M884.5 588.4L889.3 593.0L884.5 597.6" stroke="#e8e8e8" stroke-width="1.3" fill="none" stroke-linecap="round" stroke-linejoin="round"/>
<path d="M884.5 918.3L889.3 922.9L884.5 927.5" stroke="#e8e8e8" stroke-width="1.3" fill="none" stroke-linecap="round" stroke-linejoin="round"/>
<path d="M884.5 962.4L889.3 967.0L884.5 971.6" stroke="#e8e8e8" stroke-width="1.3" fill="none" stroke-linecap="round" stroke-linejoin="round"/>
<rect x="579" y="771" width="24.5" height="17" rx="1.5" fill="#2f2e32"/>
<rect x="579" y="771" width="24.5" height="3" fill="#7a797c"/><rect x="579" y="771" width="16" height="3" fill="#a8a7aa"/><rect x="579" y="771" width="8" height="3" fill="#dcdcdd"/>
<path d="M582.6 776.4L587.4 780.6L582.6 784.8" stroke="#d0d0d2" stroke-width="2.6" fill="none"/><rect x="590" y="783.8" width="7" height="2" fill="#f4f4f4"/>
<g transform="translate(590.9,812.7) rotate(45)"><rect x="-8.9" y="-8.9" width="8.3" height="8.3" rx="0.8" fill="#f07c80"/><rect x="0.6" y="-8.9" width="8.3" height="8.3" rx="0.8" fill="#7acb58"/><rect x="0.6" y="0.6" width="8.3" height="8.3" rx="0.8" fill="#f8dc70"/><rect x="-8.9" y="0.6" width="8.3" height="8.3" rx="0.8" fill="#78acf6"/></g><g stroke="#151515" stroke-width="1.5" fill="none" stroke-linecap="round"><path d="M588.3 803.2L589.6999999999999 808.2"/><path d="M591.5 803.7L592.3 808.7"/><path d="M590.9 811.7V819.2"/><path d="M590.9 811.7Q594.9 810.7 595.9 813.7"/></g><circle cx="590.9" cy="819.5" r="1.8" fill="#151515"/><circle cx="596.1" cy="814.5" r="1.9" fill="#151515"/><circle cx="590.9" cy="811.7" r="1.4" fill="#151515"/>
<g transform="translate(590.9,845.7) rotate(45)"><rect x="-8.9" y="-8.9" width="8.3" height="8.3" rx="0.8" fill="#f07c80"/><rect x="0.6" y="-8.9" width="8.3" height="8.3" rx="0.8" fill="#7acb58"/><rect x="0.6" y="0.6" width="8.3" height="8.3" rx="0.8" fill="#f8dc70"/><rect x="-8.9" y="0.6" width="8.3" height="8.3" rx="0.8" fill="#78acf6"/></g><g stroke="#151515" stroke-width="1.5" fill="none" stroke-linecap="round"><path d="M588.3 836.2L589.6999999999999 841.2"/><path d="M591.5 836.7L592.3 841.7"/><path d="M590.9 844.7V852.2"/><path d="M590.9 844.7Q594.9 843.7 595.9 846.7"/></g><circle cx="590.9" cy="852.5" r="1.8" fill="#151515"/><circle cx="596.1" cy="847.5" r="1.9" fill="#151515"/><circle cx="590.9" cy="844.7" r="1.4" fill="#151515"/>
<g transform="translate(578.6,866.8) scale(0.2470,0.2420)"><path d="M96.46 10.8L75.86.87a6.23 6.23 0 0 0-7.1 1.21L29.35 38.03 12.19 25.01a4.16 4.16 0 0 0-5.32.24L1.36 30.26a4.16 4.16 0 0 0 0 6.16L16.25 50 1.36 63.58a4.16 4.16 0 0 0 0 6.16l5.51 5.01a4.16 4.16 0 0 0 5.32.24l17.16-13.020 39.41 35.95a6.23 6.23 0 0 0 7.1 1.21l20.6-9.92A6.24 6.24 0 0 0 100 83.6V16.4a6.24 6.24 0 0 0-3.540-5.6zM75.01 72.7L45.11 50l29.9-22.7z" fill="#1684d8"/><path d="M68.8 2.1Q72 -0.5 75.9 0.9L96.5 10.8Q100 12.5 100 16.4V83.6Q100 87.5 96.5 89.2L75.9 99.1Q72 100.5 68.8 97.9L75 72.7V27.3Z" fill="#2aa4ee"/></g>
<path d="M1044 886L790 787" stroke="#e3141d" stroke-width="7" stroke-linecap="butt"/>
<path d="M766 778.5L798.5 774.5L787.5 801Z" fill="#e3141d" stroke="#e3141d" stroke-width="1" stroke-linejoin="round"/>
</svg>
</body></html>
